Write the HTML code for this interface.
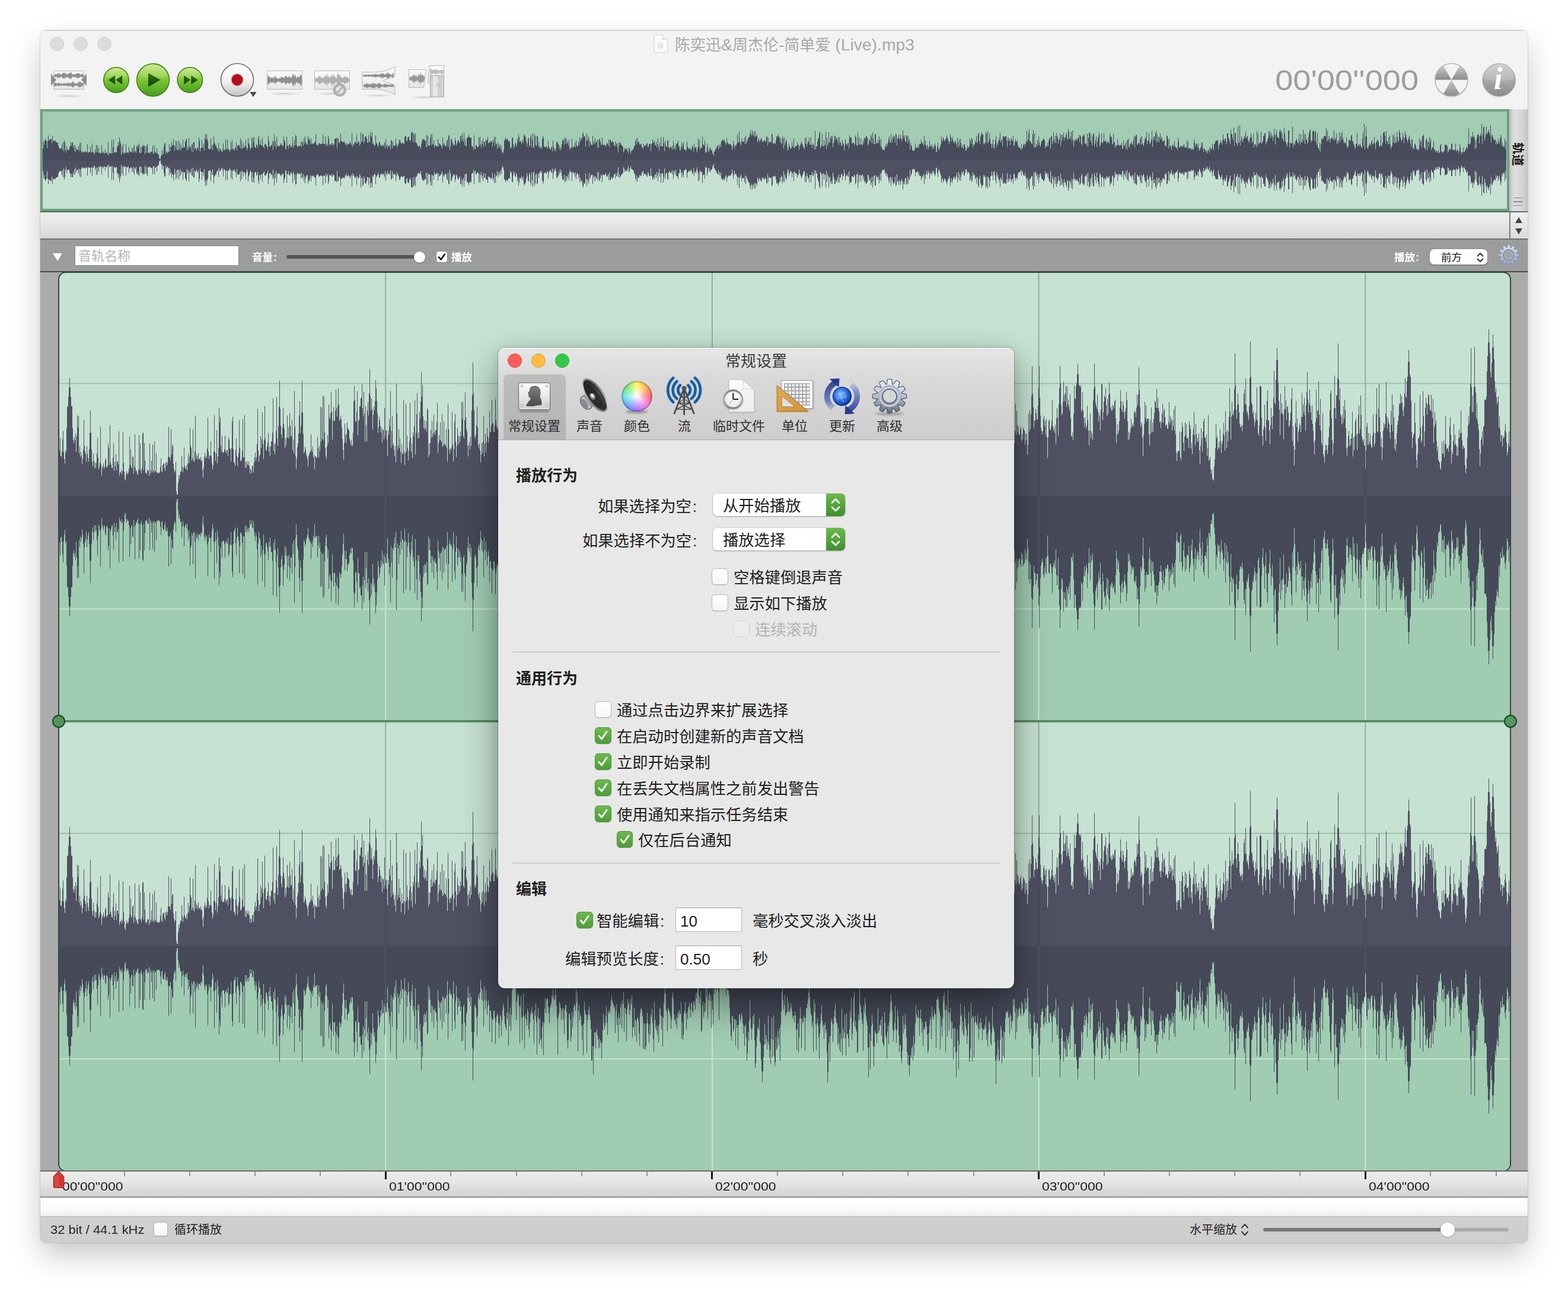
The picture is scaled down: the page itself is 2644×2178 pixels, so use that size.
<!DOCTYPE html>
<html lang="zh"><head><meta charset="utf-8"><title>Audio editor</title>
<style>html,body{margin:0;padding:0}
body{width:2644px;height:2178px;background:#fff;position:relative;overflow:hidden;font-family:"Liberation Sans",sans-serif}
#win{position:absolute;left:68px;top:51px;width:2508px;height:2044px;border-radius:10px;overflow:hidden;background:#f3f3f3;box-shadow:0 0 0 1px rgba(0,0,0,.13),0 22px 50px rgba(0,0,0,.215)}

#in{position:absolute;left:-68px;top:-51px;width:2644px;height:2178px}
#in>*,#din>*{position:absolute}
#in div,#din div{box-sizing:border-box}
.tx{position:absolute;overflow:visible}
.tx text{font-family:"Liberation Sans","Noto Sans CJK SC",sans-serif}
#tb{left:68px;top:51px;width:2508px;height:133px;background:#f3f3f3;border-top:1px solid #cfcfcf}
.tl0{width:24px;height:24px;border-radius:50%;background:#dcdcdc;border:1px solid #d0d0d0}
#time{left:2100px;top:105.5px;width:290px;height:60px;line-height:60px;text-align:right;font-size:48px;color:#9d9d9d;transform:scaleX(1.128);transform-origin:100% 50%;margin-left:1.5px}
#ov{left:68px;top:184px;width:2477px;height:173px;border:4.5px solid #69a085;border-bottom-width:5px;background:#c7e2d3;overflow:hidden}
#ov .a{position:absolute;left:0;top:0;width:100%;height:81.5px;background:#a2ccb3}
#ov svg{position:absolute;left:0;top:0}
#ovline{left:68px;top:356px;width:2508px;height:1.5px;background:#55705f}
#ovside{left:2545px;top:184px;width:31px;height:172px;background:linear-gradient(90deg,#bdbdbd,#dedede 25%,#d6d6d6 70%,#c4c4c4)}
#ovside .grip{position:absolute;left:7px;top:148.5px;width:16px;height:15px;background:linear-gradient(#8a8a8a 0 1.5px,transparent 1.5px 6.5px,#8a8a8a 6.5px 8px,transparent 8px 13px,#8a8a8a 13px 14.5px,transparent 14.5px)}
#strip{left:68px;top:357.5px;width:2477px;height:45px;background:linear-gradient(#ededed,#e9e9e9 35%,#d6d6d6)}
#stripr{left:2545px;top:357.5px;width:31px;height:45px;background:linear-gradient(#efefef,#dcdcdc);border-left:2px solid #7d7d7d}
#stripr .up{position:absolute;left:8px;top:8px;border:6px solid transparent;border-bottom:10px solid #444;border-top:0}
#stripr .dn{position:absolute;left:8px;top:27px;border:6px solid transparent;border-top:10px solid #444;border-bottom:0}
#th{left:68px;top:402px;width:2508px;height:57px;background:#9c9c9c;border-top:2px solid #707070;border-bottom:2px solid #474747}
.tri{width:0;height:0;border:8.5px solid transparent;border-top:13px solid #fff;border-bottom:0}
#tname{left:125.5px;top:413.5px;width:277px;height:34.5px;background:#fff;border:1px solid #8a8a8a}
.sl{height:6px;border-radius:3px}
.kn{border-radius:50%;background:#fff;box-shadow:0 .5px 2px rgba(0,0,0,.45)}
#thcb{left:736px;top:424px;width:18px;height:18px;border-radius:4px;background:#fff;box-shadow:0 0 0 .5px rgba(0,0,0,.3)}
#thcb svg{position:absolute;left:0;top:0}
#thpop{left:2411px;top:420px;width:97px;height:26px;border-radius:7px;background:#fff;box-shadow:0 .5px 1.5px rgba(0,0,0,.4)}
#main{left:68px;top:459px;width:2508px;height:1516px;background:#ababab}
#wf{left:98px;top:458px;width:2450px;height:1517px;border:2px solid #32463b;border-radius:13px;overflow:hidden;background:#c6e2d2}
#wf svg{position:absolute;left:0;top:0}
.hd{width:22px;height:22px;border-radius:50%;background:#57945f;border:2.5px solid #0d4a1c}
#rul{left:68px;top:1973px;width:2508px;height:46px;background:linear-gradient(#ececec,#e6e6e6 40%,#d2d2d2);border-top:2px solid #6b6b6b;border-bottom:2px solid #8e8e8e}
.tk{top:1975px;width:2px;height:8px;background:#9a9a9a}
.tk.M{width:3px;height:12.5px;background:#111}
.rl{top:1987.5px;height:24px;line-height:24px;font-size:20.4px;color:#1c1c1c;white-space:nowrap;transform:scaleX(1.125);transform-origin:0 50%}
#wstrip{left:68px;top:2019px;width:2508px;height:31px;background:linear-gradient(#fff,#fafafa 60%,#f0f0f0)}
#st{left:68px;top:2050px;width:2508px;height:45px;background:#cfcfcf;border-top:1.5px solid #b9b9b9}
.stt{top:2060px;height:26px;line-height:26px;font-size:20.4px;color:#222;white-space:nowrap;transform:scaleX(1.075);transform-origin:0 50%}
.cb{background:linear-gradient(#fff,#f6f6f6);border:1px solid #b4b4b4;box-shadow:0 .5px 1px rgba(0,0,0,.12)}
.cb.on{background:linear-gradient(#6cba4e,#4f9c39);border:1px solid #4a9235}
.cb.dis{background:#ececec;border-color:#d0d0d0;box-shadow:none}
.cb svg{position:absolute;left:-1px;top:-1px}
#dlg{position:absolute;left:840px;top:586px;width:870px;height:1080px;border-radius:10px 10px 11px 11px;overflow:hidden;background:#e8e8e8;box-shadow:0 0 0 1px rgba(0,0,0,.2),0 26px 64px rgba(0,0,0,.40),0 3px 18px rgba(0,0,0,.11)}

#din{position:absolute;left:-840px;top:-586px;width:2644px;height:2178px}
#dtb{left:840px;top:586px;width:870px;height:156px;background:linear-gradient(#e6e6e6,#dadada 30%,#cdcdcd);border-bottom:1.5px solid #a9a9a9;border-top:1px solid #f4f4f4}
.tl{width:24px;height:24px;border-radius:50%;border:1px solid}
#dsel{left:848.5px;top:631px;width:105.5px;height:110px;border-radius:9px 9px 0 0;background:linear-gradient(#bdbdbd,#b4b4b4)}
.pop{width:223px;height:38px;border-radius:7px;background:#fff;box-shadow:0 0 0 .6px rgba(0,0,0,.18),0 1px 2px rgba(0,0,0,.28);overflow:hidden}
.pop .cap{position:absolute;right:0;top:0;width:32px;height:38px;background:linear-gradient(#6cba4d,#3f8f2e)}
.pop svg{position:absolute;left:0;top:0}
.sep{left:864px;width:823px;height:1.5px;background:#cdcdcd}
.inp{width:111.5px;height:41px;background:#fff;border:1px solid #b8b8b8;border-top-color:#a4a4a4;font-size:26px;line-height:44px;padding-left:7px;color:#1d1d1d}
</style></head><body>
<div id="win"><div id="in">
<div id="tb"></div>
<div class="tl0" style="left:84px;top:61.5px"></div>
<div class="tl0" style="left:124px;top:61.5px"></div>
<div class="tl0" style="left:164px;top:61.5px"></div>
<svg class="tx" style="left:1102px;top:58px" width="24" height="31" viewBox="0 0 24 31"><path d="M1 .5h14.5L23.5 8.5V30.5H1z" fill="#fafafa" stroke="#d2d2d2"/><path d="M15.5.5v8h8" fill="#eee" stroke="#d2d2d2"/><circle cx="11.5" cy="19" r="5.2" fill="#dedede"/><path d="M10 21.5v-5l3.6-.8v4.6" fill="none" stroke="#fff" stroke-width="1"/><circle cx="9.2" cy="21.5" r="1" fill="#fff"/><circle cx="12.8" cy="20.5" r="1" fill="#fff"/></svg>
<svg class="tx" role="img" aria-label="陈奕迅&amp;周杰伦-简单爱 (Live).mp3" style="left:1137.8px;top:61.5px" width="406.1" height="32.5" fill="#a9a9a9"><text y="22.88" font-size="26"><tspan x="0">陈奕迅</tspan><tspan x="78" font-size="28.34">&amp;</tspan><tspan x="96.9">周杰伦</tspan><tspan x="174.9" font-size="28.34">-</tspan><tspan x="184.34">简单爱</tspan><tspan x="270.22" font-size="28.34">(Live).mp3</tspan></text></svg>
<svg class="tx" style="left:68px;top:95px" width="2508" height="88" viewBox="68 95 2508 88"><defs>
<linearGradient id="gb" x1="0" y1="0" x2="0" y2="1"><stop offset="0" stop-color="#cbe984"/><stop offset=".45" stop-color="#86c93a"/><stop offset="1" stop-color="#439f1c"/></linearGradient>
<linearGradient id="gt" x1="0" y1="0" x2="0" y2="1"><stop offset="0" stop-color="#2f6c14"/><stop offset="1" stop-color="#0f4a05"/></linearGradient>
<linearGradient id="rec" x1="0" y1="0" x2="0" y2="1"><stop offset="0" stop-color="#fff"/><stop offset=".55" stop-color="#f0f0f0"/><stop offset="1" stop-color="#c4c4c4"/></linearGradient>
<linearGradient id="gry" x1="0" y1="0" x2="0" y2="1"><stop offset="0" stop-color="#c9c9c9"/><stop offset="1" stop-color="#8b8b8b"/></linearGradient>
<linearGradient id="plate" x1="0" y1="0" x2="0" y2="1"><stop offset="0" stop-color="#fbfbfb"/><stop offset="1" stop-color="#e6e6e6"/></linearGradient>
<radialGradient id="shd"><stop offset="0" stop-color="#000" stop-opacity=".16"/><stop offset="1" stop-color="#000" stop-opacity="0"/></radialGradient>
</defs><ellipse cx="116" cy="162" rx="27" ry="3" fill="url(#shd)"/><rect x="90.5" y="119.5" width="51" height="31" fill="url(#plate)" stroke="#b5b5b5"/><g transform="translate(91,120)"><path d="M0 7.5L0.4 6.1L1.2 5.7L2.0 5.6L2.8 4.7L3.6 4.2L4.4 5.6L5.2 5.6L6.0 2.6L6.9 4.6L7.7 4.7L8.5 2.2L9.3 4.3L10.1 3.7L10.9 5.2L11.7 5.5L12.5 6.1L13.3 4.5L14.1 3.1L14.9 3.6L15.7 2.4L16.5 2.3L17.3 4.8L18.1 1.8L19.0 2.8L19.8 4.3L20.6 5.6L21.4 3.5L22.2 5.3L23.0 5.5L23.8 4.3L24.6 3.9L25.4 2.5L26.2 3.9L27.0 2.0L27.8 3.3L28.6 1.2L29.4 1.7L30.2 5.1L31.0 5.2L31.9 5.3L32.7 3.9L33.5 5.7L34.3 5.4L35.1 5.6L35.9 4.7L36.7 4.7L37.5 4.6L38.3 3.8L39.1 3.8L39.9 2.8L40.7 3.8L41.5 3.3L42.3 3.9L43.1 4.1L44.0 5.2L44.8 6.3L45.6 5.0L46.4 4.5L47.2 4.4L48.0 5.0L48.8 4.6L49.6 5.7L50.0 7.5L49.6 9.3L48.8 10.4L48.0 10.0L47.2 10.6L46.4 10.5L45.6 10.0L44.8 8.7L44.0 9.8L43.1 10.9L42.3 11.1L41.5 11.7L40.7 11.2L39.9 12.2L39.1 11.2L38.3 11.2L37.5 10.4L36.7 10.3L35.9 10.3L35.1 9.4L34.3 9.6L33.5 9.3L32.7 11.1L31.9 9.7L31.0 9.8L30.2 9.9L29.4 13.3L28.6 13.8L27.8 11.7L27.0 13.0L26.2 11.1L25.4 12.5L24.6 11.1L23.8 10.7L23.0 9.5L22.2 9.7L21.4 11.5L20.6 9.4L19.8 10.7L19.0 12.2L18.1 13.2L17.3 10.2L16.5 12.7L15.7 12.6L14.9 11.4L14.1 11.9L13.3 10.5L12.5 8.9L11.7 9.5L10.9 9.8L10.1 11.3L9.3 10.7L8.5 12.8L7.7 10.3L6.9 10.4L6.0 12.4L5.2 9.4L4.4 9.4L3.6 10.8L2.8 10.3L2.0 9.4L1.2 9.3L0.4 8.9z" fill="#8f8f8f"/></g><g transform="translate(91,135)"><path d="M0 7.5L0.4 4.4L1.2 4.3L2.0 4.4L2.8 4.4L3.6 5.1L4.4 5.0L5.2 6.6L6.0 5.7L6.9 4.6L7.7 5.1L8.5 4.5L9.3 6.1L10.1 5.3L10.9 5.8L11.7 5.2L12.5 5.2L13.3 6.4L14.1 6.1L14.9 6.1L15.7 5.2L16.5 5.3L17.3 6.2L18.1 4.8L19.0 6.0L19.8 4.8L20.6 5.9L21.4 6.1L22.2 3.8L23.0 5.6L23.8 5.6L24.6 3.9L25.4 4.5L26.2 6.0L27.0 5.1L27.8 5.4L28.6 4.7L29.4 5.5L30.2 3.0L31.0 3.4L31.9 2.2L32.7 2.3L33.5 4.5L34.3 4.4L35.1 5.2L35.9 5.5L36.7 6.0L37.5 5.9L38.3 5.4L39.1 6.2L39.9 3.9L40.7 4.4L41.5 4.2L42.3 1.8L43.1 3.0L44.0 3.7L44.8 3.2L45.6 2.6L46.4 5.4L47.2 3.0L48.0 6.2L48.8 5.3L49.6 4.6L50.0 7.5L49.6 10.4L48.8 9.7L48.0 8.8L47.2 12.0L46.4 9.6L45.6 12.4L44.8 11.8L44.0 11.3L43.1 12.0L42.3 13.2L41.5 10.8L40.7 10.6L39.9 11.1L39.1 8.8L38.3 9.6L37.5 9.1L36.7 9.0L35.9 9.5L35.1 9.8L34.3 10.6L33.5 10.5L32.7 12.7L31.9 12.8L31.0 11.6L30.2 12.0L29.4 9.5L28.6 10.3L27.8 9.6L27.0 9.9L26.2 9.0L25.4 10.5L24.6 11.1L23.8 9.4L23.0 9.4L22.2 11.2L21.4 8.9L20.6 9.1L19.8 10.2L19.0 9.0L18.1 10.2L17.3 8.8L16.5 9.7L15.7 9.8L14.9 8.9L14.1 8.9L13.3 8.6L12.5 9.8L11.7 9.8L10.9 9.2L10.1 9.7L9.3 8.9L8.5 10.5L7.7 9.9L6.9 10.4L6.0 9.3L5.2 8.4L4.4 10.0L3.6 9.9L2.8 10.6L2.0 10.6L1.2 10.7L0.4 10.6z" fill="#8f8f8f"/></g><path d="M86 124v21l9-10.5zM146 124v21l-9-10.5z" fill="#8e8e8e"/><g transform="translate(196,134.8)"><circle r="22.900000000000002" fill="#fff" opacity=".75"/><circle r="21.3" fill="url(#gb)" stroke="#3f7d18" stroke-width="1.6"/><path d="M-18.3 -6.0A19.2 19.2 0 0 1 18.3 -6.0Q0 2.6 -18.3 -6.0" fill="#fff" opacity=".13"/><path d="M-13.2 0L-2 -7.7V7.7zM-.6 0L10.2 -7.7V7.7z" fill="url(#gt)"/></g><g transform="translate(258,134.8)"><circle r="29.0" fill="#fff" opacity=".75"/><circle r="27.4" fill="url(#gb)" stroke="#3f7d18" stroke-width="1.6"/><path d="M-23.6 -7.7A24.7 24.7 0 0 1 23.6 -7.7Q0 3.3 -23.6 -7.7" fill="#fff" opacity=".13"/><path d="M-8 -11.6L12.6 0L-8 11.6z" fill="url(#gt)"/></g><g transform="translate(320.3,134.8)"><circle r="22.900000000000002" fill="#fff" opacity=".75"/><circle r="21.3" fill="url(#gb)" stroke="#3f7d18" stroke-width="1.6"/><path d="M-18.3 -6.0A19.2 19.2 0 0 1 18.3 -6.0Q0 2.6 -18.3 -6.0" fill="#fff" opacity=".13"/><path d="M13.2 0L2 -7.7V7.7zM.9 0L-10.2 -7.7V7.7z" fill="url(#gt)"/></g><circle cx="400" cy="136" r="28.5" fill="#000" opacity=".06"/><circle cx="400" cy="134.6" r="27.5" fill="url(#rec)" stroke="#5a5a5a" stroke-width="1.4"/><circle cx="400" cy="134.6" r="11" fill="#f6c9cb"/><circle cx="400" cy="134.6" r="9.6" fill="#b3101c"/><path d="M421.5 155h11l-5.5 8.5z" fill="#444"/><ellipse cx="480" cy="158" rx="30" ry="2.6" fill="url(#shd)"/><rect x="450.5" y="119.5" width="59" height="31" fill="url(#plate)" stroke="#bcbcbc"/><g transform="translate(451,120)"><path d="M0 15.0L0.4 8.4L1.2 8.0L2.0 6.3L2.8 9.5L3.6 9.9L4.4 10.3L5.2 12.4L6.0 11.6L6.8 10.6L7.7 9.5L8.5 12.2L9.3 11.1L10.1 12.0L10.9 8.6L11.7 9.3L12.5 12.4L13.3 8.4L14.1 8.9L14.9 10.4L15.7 10.9L16.5 12.7L17.3 13.2L18.1 11.2L18.9 12.7L19.7 12.1L20.5 11.7L21.3 12.5L22.2 10.5L23.0 10.6L23.8 8.8L24.6 10.4L25.4 10.0L26.2 10.9L27.0 10.7L27.8 11.8L28.6 12.1L29.4 8.8L30.2 8.0L31.0 8.0L31.8 8.1L32.6 10.0L33.4 10.3L34.2 9.9L35.0 11.3L35.8 7.4L36.7 10.0L37.5 8.5L38.3 11.4L39.1 10.0L39.9 9.0L40.7 12.1L41.5 10.3L42.3 4.8L43.1 7.3L43.9 2.7L44.7 7.3L45.5 10.0L46.3 6.0L47.1 5.8L47.9 10.1L48.7 11.9L49.5 11.8L50.3 9.2L51.2 8.3L52.0 10.8L52.8 9.2L53.6 9.8L54.4 9.8L55.2 3.1L56.0 8.7L56.8 5.7L57.6 7.4L58.0 15.0L57.6 22.6L56.8 24.3L56.0 21.3L55.2 26.9L54.4 20.2L53.6 20.2L52.8 20.8L52.0 19.2L51.2 21.7L50.3 20.8L49.5 18.2L48.7 18.1L47.9 19.9L47.1 24.2L46.3 24.0L45.5 20.0L44.7 22.7L43.9 27.3L43.1 22.7L42.3 25.2L41.5 19.7L40.7 17.9L39.9 21.0L39.1 20.0L38.3 18.6L37.5 21.5L36.7 20.0L35.8 22.6L35.0 18.7L34.2 20.1L33.4 19.7L32.6 20.0L31.8 21.9L31.0 22.0L30.2 22.0L29.4 21.2L28.6 17.9L27.8 18.2L27.0 19.3L26.2 19.1L25.4 20.0L24.6 19.6L23.8 21.2L23.0 19.4L22.2 19.5L21.3 17.5L20.5 18.3L19.7 17.9L18.9 17.3L18.1 18.8L17.3 16.8L16.5 17.3L15.7 19.1L14.9 19.6L14.1 21.1L13.3 21.6L12.5 17.6L11.7 20.7L10.9 21.4L10.1 18.0L9.3 18.9L8.5 17.8L7.7 20.5L6.8 19.4L6.0 18.4L5.2 17.6L4.4 19.7L3.6 20.1L2.8 20.5L2.0 23.7L1.2 22.0L0.4 21.6z" fill="#8f8f8f"/></g><ellipse cx="560" cy="158" rx="30" ry="2.6" fill="url(#shd)"/><rect x="530.5" y="119.5" width="59" height="31" fill="url(#plate)" stroke="#bcbcbc"/><g transform="translate(531,120)"><path d="M0 15.0L0.4 11.1L1.2 10.7L2.0 11.0L2.8 12.7L3.6 12.9L4.4 11.2L5.2 11.3L6.0 8.3L6.8 8.5L7.7 8.7L8.5 8.8L9.3 8.2L10.1 11.3L10.9 10.0L11.7 11.8L12.5 9.2L13.3 13.1L14.1 9.7L14.9 12.1L15.7 8.1L16.5 9.4L17.3 8.4L18.1 4.6L18.9 10.7L19.7 10.3L20.5 4.1L21.3 7.7L22.2 11.1L23.0 7.0L23.8 8.9L24.6 12.8L25.4 10.5L26.2 11.0L27.0 9.1L27.8 5.9L28.6 9.0L29.4 4.0L30.2 9.7L31.0 8.8L31.8 4.0L32.6 8.2L33.4 9.0L34.2 9.3L35.0 11.2L35.8 11.4L36.7 12.1L37.5 7.2L38.3 4.4L39.1 3.3L39.9 5.3L40.7 7.7L41.5 7.8L42.3 5.7L43.1 6.6L43.9 11.0L44.7 11.0L45.5 11.2L46.3 11.6L47.1 9.7L47.9 10.1L48.7 12.0L49.5 7.1L50.3 9.2L51.2 8.5L52.0 10.4L52.8 9.4L53.6 10.0L54.4 8.5L55.2 12.1L56.0 10.7L56.8 12.5L57.6 11.0L58.0 15.0L57.6 19.0L56.8 17.5L56.0 19.3L55.2 17.9L54.4 21.5L53.6 20.0L52.8 20.6L52.0 19.6L51.2 21.5L50.3 20.8L49.5 22.9L48.7 18.0L47.9 19.9L47.1 20.3L46.3 18.4L45.5 18.8L44.7 19.0L43.9 19.0L43.1 23.4L42.3 24.3L41.5 22.2L40.7 22.3L39.9 24.7L39.1 26.7L38.3 25.6L37.5 22.8L36.7 17.9L35.8 18.6L35.0 18.8L34.2 20.7L33.4 21.0L32.6 21.8L31.8 26.0L31.0 21.2L30.2 20.3L29.4 26.0L28.6 21.0L27.8 24.1L27.0 20.9L26.2 19.0L25.4 19.5L24.6 17.2L23.8 21.1L23.0 23.0L22.2 18.9L21.3 22.3L20.5 25.9L19.7 19.7L18.9 19.3L18.1 25.4L17.3 21.6L16.5 20.6L15.7 21.9L14.9 17.9L14.1 20.3L13.3 16.9L12.5 20.8L11.7 18.2L10.9 20.0L10.1 18.7L9.3 21.8L8.5 21.2L7.7 21.3L6.8 21.5L6.0 21.7L5.2 18.7L4.4 18.8L3.6 17.1L2.8 17.3L2.0 19.0L1.2 19.3L0.4 18.9z" fill="#b0b0b0"/></g><circle cx="572.8" cy="151.7" r="10.6" fill="#b4b4b4" stroke="#a2a2a2"/><circle cx="572.8" cy="151.7" r="6.4" fill="#e8e8e8"/><path d="M568.3 156.3l9-9.2" stroke="#b4b4b4" stroke-width="3.2"/><ellipse cx="638" cy="161" rx="28" ry="2.4" fill="url(#shd)"/><path d="M610.5 121.5h22c14 0 24-4 33.5-9v16c-9 3-17 6-21 7.500c4 1.500 12 4.500 21 7.500v16c-9.500-5-19.500-9-33.500-9h-22z" fill="url(#plate)" stroke="#b8b8b8"/><g transform="translate(612,121)"><path d="M0 6.5L0.4 5.2L1.2 4.4L2.0 4.6L2.8 5.0L3.6 5.4L4.4 4.6L5.2 4.4L6.0 4.8L6.8 4.7L7.6 5.1L8.4 5.5L9.2 4.7L10.0 4.3L10.8 5.3L11.6 4.0L12.4 5.1L13.2 5.2L14.0 5.6L14.8 4.4L15.6 4.5L16.4 4.0L17.2 4.2L18.0 5.2L18.8 4.4L19.6 3.8L20.4 4.8L21.2 2.5L22.0 4.1L22.8 4.8L23.6 3.4L24.4 5.2L25.2 4.1L26.0 5.0L26.8 4.4L27.6 4.4L28.4 3.7L29.2 4.2L30.0 4.6L30.8 1.5L31.6 3.7L32.4 1.9L33.2 4.0L34.0 2.0L34.8 2.8L35.6 3.8L36.4 4.5L37.2 4.5L38.0 3.6L38.8 4.6L39.6 3.2L40.4 1.6L41.2 3.7L42.0 0.8L42.8 1.1L43.6 3.1L44.4 3.5L45.2 3.6L46.0 4.3L46.8 3.6L47.6 5.2L48.4 5.4L49.2 5.0L50.0 3.0L50.8 1.8L51.6 3.1L52.0 6.5L51.6 9.9L50.8 11.2L50.0 10.0L49.2 8.0L48.4 7.6L47.6 7.8L46.8 9.4L46.0 8.7L45.2 9.4L44.4 9.5L43.6 9.9L42.8 11.9L42.0 12.2L41.2 9.3L40.4 11.4L39.6 9.8L38.8 8.4L38.0 9.4L37.2 8.5L36.4 8.5L35.6 9.2L34.8 10.2L34.0 11.0L33.2 9.0L32.4 11.1L31.6 9.3L30.8 11.5L30.0 8.4L29.2 8.8L28.4 9.3L27.6 8.6L26.8 8.6L26.0 8.0L25.2 8.9L24.4 7.8L23.6 9.6L22.8 8.2L22.0 8.9L21.2 10.5L20.4 8.2L19.6 9.2L18.8 8.6L18.0 7.8L17.2 8.8L16.4 9.0L15.6 8.5L14.8 8.6L14.0 7.4L13.2 7.8L12.4 7.9L11.6 9.0L10.8 7.7L10.0 8.7L9.2 8.3L8.4 7.5L7.6 7.9L6.8 8.3L6.0 8.2L5.2 8.6L4.4 8.4L3.6 7.6L2.8 8.0L2.0 8.4L1.2 8.6L0.4 7.8z" fill="#909090"/></g><g transform="translate(612,138)"><path d="M0 6.5L0.4 4.4L1.2 5.3L2.0 5.3L2.8 2.7L3.6 4.5L4.4 4.5L5.2 2.6L6.0 3.5L6.8 1.7L7.6 4.0L8.4 2.0L9.2 4.2L10.0 4.0L10.8 4.0L11.6 4.6L12.4 3.4L13.2 3.2L14.0 4.7L14.8 1.6L15.6 2.3L16.4 3.2L17.2 3.7L18.0 1.3L18.8 2.6L19.6 1.9L20.4 3.1L21.2 3.4L22.0 4.8L22.8 4.3L23.6 3.9L24.4 4.3L25.2 1.8L26.0 3.6L26.8 1.9L27.6 1.2L28.4 2.4L29.2 4.3L30.0 2.5L30.8 3.4L31.6 4.9L32.4 5.5L33.2 5.0L34.0 5.5L34.8 3.4L35.6 4.1L36.4 3.8L37.2 4.0L38.0 3.3L38.8 2.7L39.6 4.4L40.4 4.4L41.2 4.1L42.0 4.9L42.8 4.6L43.6 4.9L44.4 5.1L45.2 4.6L46.0 4.7L46.8 5.4L47.6 3.6L48.4 4.8L49.2 4.6L50.0 4.7L50.8 3.8L51.6 3.8L52.0 6.5L51.6 9.2L50.8 9.2L50.0 8.3L49.2 8.4L48.4 8.2L47.6 9.4L46.8 7.6L46.0 8.3L45.2 8.4L44.4 7.9L43.6 8.1L42.8 8.4L42.0 8.1L41.2 8.9L40.4 8.6L39.6 8.6L38.8 10.3L38.0 9.7L37.2 9.0L36.4 9.2L35.6 8.9L34.8 9.6L34.0 7.5L33.2 8.0L32.4 7.5L31.6 8.1L30.8 9.6L30.0 10.5L29.2 8.7L28.4 10.6L27.6 11.8L26.8 11.1L26.0 9.4L25.2 11.2L24.4 8.7L23.6 9.1L22.8 8.7L22.0 8.2L21.2 9.6L20.4 9.9L19.6 11.1L18.8 10.4L18.0 11.7L17.2 9.3L16.4 9.8L15.6 10.7L14.8 11.4L14.0 8.3L13.2 9.8L12.4 9.6L11.6 8.4L10.8 9.0L10.0 9.0L9.2 8.8L8.4 11.0L7.6 9.0L6.8 11.3L6.0 9.5L5.2 10.4L4.4 8.5L3.6 8.5L2.8 10.3L2.0 7.7L1.2 7.7L0.4 8.6z" fill="#909090"/></g><ellipse cx="715" cy="164" rx="26" ry="2.4" fill="url(#shd)"/><path d="M689.500 117.500h29l-4 30h-25z" fill="url(#plate)" stroke="#b8b8b8"/><g transform="translate(690,118)"><path d="M0 14.5L0.4 12.4L1.2 12.3L2.0 11.6L2.8 10.1L3.7 11.7L4.5 11.5L5.3 10.6L6.1 7.4L6.9 10.5L7.7 6.9L8.5 7.3L9.3 10.6L10.2 8.6L11.0 9.6L11.8 10.4L12.6 9.2L13.4 12.3L14.2 12.0L15.0 6.5L15.8 8.6L16.7 9.3L17.5 7.9L18.3 7.4L19.1 2.6L19.9 8.7L20.7 9.0L21.5 7.2L22.3 8.5L23.2 7.9L24.0 10.1L24.8 10.8L25.6 10.5L26.0 14.5L25.6 18.5L24.8 18.2L24.0 18.9L23.2 21.1L22.3 20.5L21.5 21.8L20.7 20.0L19.9 20.3L19.1 26.4L18.3 21.6L17.5 21.1L16.7 19.7L15.8 20.4L15.0 22.5L14.2 17.0L13.4 16.7L12.6 19.8L11.8 18.6L11.0 19.4L10.2 20.4L9.3 18.4L8.5 21.7L7.7 22.1L6.9 18.5L6.1 21.6L5.3 18.4L4.5 17.5L3.7 17.3L2.8 18.9L2.0 17.4L1.2 16.7L0.4 16.6z" fill="#9a9a9a"/></g><path d="M724.500 110.500h24v29h-27z" fill="url(#plate)" stroke="#b8b8b8"/><g transform="translate(725,111)"><path d="M0 10.0L0.4 5.1L1.2 5.1L2.1 4.7L2.9 7.1L3.7 6.2L4.5 6.0L5.3 6.5L6.2 8.4L7.0 7.0L7.8 6.8L8.6 6.9L9.4 5.3L10.3 6.6L11.1 6.9L11.9 5.4L12.7 6.5L13.6 7.6L14.4 7.7L15.2 7.4L16.0 8.6L16.8 7.5L17.7 7.2L18.5 7.7L19.3 6.5L20.1 6.1L20.9 6.9L21.8 6.5L22.6 8.0L23.0 10.0L22.6 12.0L21.8 13.5L20.9 13.1L20.1 13.9L19.3 13.5L18.5 12.3L17.7 12.8L16.8 12.5L16.0 11.4L15.2 12.6L14.4 12.3L13.6 12.4L12.7 13.5L11.9 14.6L11.1 13.1L10.3 13.4L9.4 14.7L8.6 13.1L7.8 13.2L7.0 13.0L6.2 11.6L5.3 13.5L4.5 14.0L3.7 13.8L2.9 12.9L2.1 15.3L1.2 14.9L0.4 14.9z" fill="#bbb"/></g><rect x="725.500" y="127.500" width="23" height="36" fill="#d0d0d0" stroke="#a9a9a9"/><rect x="730" y="128" width="8" height="35" fill="#e6e6e6"/><rect x="736.500" y="141.500" width="5" height="3" fill="#f4f4f4" stroke="#999" stroke-width=".8"/><circle cx="2447.5" cy="136.1" r="28.5" fill="#000" opacity=".08"/><circle cx="2447.5" cy="134.6" r="27.5" fill="#f3f3f3" stroke="#a8a8a8" stroke-width="1.2"/><path d="M2447.5 134.6L2420.5 134.6A27 27 0 0 1 2434.0 111.2z" fill="url(#gry)"/><path d="M2447.5 134.6L2461.0 111.2A27 27 0 0 1 2474.5 134.6z" fill="url(#gry)"/><path d="M2447.5 134.6L2461.0 158.0A27 27 0 0 1 2434.0 158.0z" fill="url(#gry)"/><circle cx="2527.7" cy="136.1" r="28.5" fill="#000" opacity=".08"/><circle cx="2527.7" cy="134.6" r="27.5" fill="url(#gry)" stroke="#8c8c8c" stroke-width="1"/><path d="M2500.7 131.6A27 27 0 0 1 2554.7 131.6Q2527.7 142.6 2500.7 131.6" fill="#fff" opacity=".16"/><text x="2526.2" y="150.1" style="font-family:Liberation Serif,serif;font-style:italic;font-weight:bold;font-size:52px" fill="#fff" text-anchor="middle">i</text></svg>
<div id="time">00'00''000</div>
<div id="ov"><div class="a"></div><div class="b"></div><svg width="2468" height="164" viewBox="0 0 2468 164"><defs><filter id="wb2" x="-1%" y="-1%" width="102%" height="102%"><feGaussianBlur stdDeviation="0.45 0.2"/></filter><path id="ovw" d="M0 1V-19h1V-31.6h1V-25.4h1V-32.6h1V-35.5h1V-32.9h1V-31.8h1V-19.6h1V-31.8h1V-41.3h1V-32.9h1V-33.6h1V-34.9h1V-34.8h1V-35.9h1V-28.2h1V-40.3h1V-31.5h1V-33.1h1V-31.6h1V-32.6h1V-32h1V-29.2h1V-29.8h1V-29.7h1V-28.5h1V-23.4h1V-20.6h1V-18.3h1V-19.4h1V-19h1V-19.4h1V-26h1V-17.3h1V-29.6h1V-14.6h1V-33.2h1V-28.9h1V-16.4h1V-12h1V-22.5h1V-17.8h1V-16.4h1V-16.9h1V-16.5h1V-21.9h1V-23h1V-29.4h1V-23.8h1V-29.2h1V-29.5h1V-21.1h1V-24.9h1V-15.6h1V-24.8h1V-12.9h1V-20.7h1V-16.7h1V-17.8h1V-16.9h1V-23.3h1V-14.7h1V-28.3h1V-16h1V-29.3h1V-13.6h1V-11.7h1V-14.3h1V-14.5h1V-12.4h1V-12.9h1V-14.3h1V-14.5h1V-11.9h1V-13.5h1V-26.5h1V-12.1h1V-12.7h1V-13.2h1V-14h1V-22.5h1V-13h1V-12.1h1V-27.7h1V-13.2h1V-13.5h1V-10.1h1V-10.2h1V-17.1h1V-12.7h1V-25.6h1V-13.2h1V-24h1V-11.8h1V-19.8h1V-12.1h1V-11.9h1V-10.3h1V-11.8h1V-24.5h1V-11.7h1V-12.2h1V-14.5h1V-10.7h1V-11.5h1V-17.5h1V-11.2h1V-12.2h1V-12h1V-8.5h1V-29.8h1V-8.3h1V-12.3h1V-11.6h1V-10.9h1V-10.4h1V-34.1h1V-10.6h1V-21.5h1V-34.2h1V-12.2h1V-12.2h1V-12.7h1V-13.3h1V-12h1V-21.8h1V-23.3h1V-29.8h1V-23.9h1V-38h1V-31.7h1V-27.3h1V-8.4h1V-22.9h1V-11.9h1V-26.9h1V-10.1h1V-12.1h1V-11.7h1V-11.3h1V-26.3h1V-11.6h1V-13.2h1V-12.2h1V-11.2h1V-21.8h1V-13.9h1V-14.4h1V-13.1h1V-12.4h1V-19.5h1V-14h1V-20.9h1V-11.9h1V-25.3h1V-13.9h1V-15.2h1V-11.7h1V-22.6h1V-24.8h1V-19.9h1V-24.8h1V-27.9h1V-11.8h1V-11.2h1V-22.3h1V-12.2h1V-22.2h1V-25.1h1V-21.9h1V-25.1h1V-23.5h1V-10.1h1V-22.8h1V-12.3h1V-24.1h1V-27.6h1V-11.4h1V-13h1V-12.2h1V-11.3h1V-12.5h1V-13.2h1V-14h1V-13.9h1V-23.9h1V-10.4h1V-10.8h1V-24.5h1V-13.6h1V-12.7h1V-11.8h1V-19.5h1V-10.5h1V-10h1V-8.5h1V-3.1h1V-1.1h1V-1.1h1V-6.2h1V-7.9h1V-16.3h1V-9.1h1V-10.7h1V-22.2h1V-28.5h1V-27.6h1V-9.6h1V-14.6h1V-12.6h1V-11.1h1V-14.5h1V-12.8h1V-26.3h1V-14.6h1V-22.7h1V-20.9h1V-30.3h1V-24.6h1V-24.3h1V-34.8h1V-25.1h1V-15.2h1V-23h1V-32.6h1V-17.7h1V-30.7h1V-15.9h1V-17h1V-32.7h1V-17.4h1V-27.8h1V-15.8h1V-25.1h1V-19.5h1V-19.7h1V-33.5h1V-20.6h1V-22.3h1V-20.5h1V-31.3h1V-33h1V-35.4h1V-15.5h1V-22.5h1V-17.4h1V-36.6h1V-20.1h1V-23.2h1V-20.9h1V-15h1V-25.9h1V-27.4h1V-13.3h1V-29.4h1V-29.7h1V-18h1V-19.5h1V-19.6h1V-15.2h1V-20.1h1V-21.2h1V-17.5h1V-37.4h1V-32h1V-14h1V-19.6h1V-19.9h1V-34.1h1V-21h1V-20.2h1V-27.6h1V-15.5h1V-35.8h1V-43.9h1V-33.6h1V-42.5h1V-34.7h1V-31.2h1V-18.4h1V-19.2h1V-17.4h1V-17h1V-36.1h1V-19.9h1V-25.4h1V-16.4h1V-25.7h1V-39.5h1V-29.1h1V-26.7h1V-23.9h1V-24.8h1V-20.6h1V-18.7h1V-16.3h1V-29h1V-13.7h1V-19.4h1V-18.5h1V-16.4h1V-14.6h1V-12.9h1V-17.9h1V-28.3h1V-14.8h1V-17.5h1V-16.8h1V-34.7h1V-19.1h1V-17.7h1V-33.9h1V-17.9h1V-18.7h1V-16.8h1V-13.8h1V-16.4h1V-30.3h1V-18.3h1V-33.2h1V-18.8h1V-16.5h1V-19.4h1V-15.8h1V-19h1V-21.6h1V-29.3h1V-15.7h1V-24.1h1V-25.3h1V-24.9h1V-24.2h1V-20.7h1V-35.9h1V-18.7h1V-32.5h1V-18.5h1V-20.8h1V-27.9h1V-20.6h1V-20.8h1V-24.2h1V-33h1V-21.5h1V-16.3h1V-19.5h1V-36.4h1V-27.9h1V-25.6h1V-20.1h1V-17.5h1V-21.6h1V-36.8h1V-20.7h1V-37.4h1V-29.9h1V-38.6h1V-21.7h1V-20.2h1V-20.7h1V-26.2h1V-25.1h1V-19.9h1V-35.1h1V-40.2h1V-25.8h1V-25.8h1V-32.9h1V-24h1V-24.5h1V-37.3h1V-22.8h1V-21.4h1V-19.6h1V-26.3h1V-26.9h1V-25.5h1V-23.6h1V-21.9h1V-17.9h1V-41.1h1V-32.2h1V-22.8h1V-22.1h1V-23.1h1V-24.4h1V-25.7h1V-31.9h1V-16.6h1V-30.6h1V-43.1h1V-23.4h1V-31.9h1V-19h1V-38.7h1V-23.5h1V-24.4h1V-22.5h1V-22.2h1V-23.7h1V-25h1V-28h1V-25.6h1V-25.2h1V-23h1V-23.6h1V-39.5h1V-33h1V-30h1V-18.8h1V-17.5h1V-39h1V-24.2h1V-23.5h1V-19.1h1V-25.5h1V-26.9h1V-24h1V-20.9h1V-22.1h1V-24.9h1V-39h1V-20h1V-23.6h1V-33.6h1V-24.2h1V-41.7h1V-40.8h1V-24.4h1V-22h1V-21.9h1V-24.6h1V-23.7h1V-22.8h1V-23.3h1V-30.9h1V-22h1V-31h1V-29.2h1V-23.9h1V-35.7h1V-27.6h1V-39.4h1V-30.5h1V-27.6h1V-25.7h1V-25.8h1V-40.3h1V-34.3h1V-36.2h1V-32.1h1V-26.1h1V-36.2h1V-26.9h1V-28.3h1V-26.4h1V-26.5h1V-28.5h1V-29.1h1V-30.5h1V-43.2h1V-26.8h1V-24.5h1V-24.1h1V-25.3h1V-27.7h1V-28.6h1V-27.1h1V-26.6h1V-26h1V-27.7h1V-26.9h1V-42.4h1V-27.1h1V-26.5h1V-26.6h1V-39.5h1V-23h1V-28.4h1V-26.3h1V-23.7h1V-40.6h1V-36h1V-24.9h1V-26.6h1V-26.2h1V-24h1V-27.9h1V-28.7h1V-23.8h1V-26h1V-26h1V-36h1V-35.1h1V-36.2h1V-36.9h1V-18.9h1V-37h1V-35.2h1V-28.1h1V-29h1V-31.1h1V-44.1h1V-32h1V-31.3h1V-30.5h1V-29.3h1V-30.8h1V-31.5h1V-28.2h1V-25.6h1V-27.9h1V-23h1V-27.2h1V-27.2h1V-25.6h1V-26.7h1V-28.4h1V-31.5h1V-27.6h1V-25h1V-45h1V-22.5h1V-27.3h1V-24.3h1V-27.7h1V-30.4h1V-30h1V-27.6h1V-42h1V-27.2h1V-29.4h1V-31.7h1V-29.9h1V-24.1h1V-26.2h1V-46.5h1V-30.2h1V-31h1V-44.3h1V-42.2h1V-27.9h1V-31.6h1V-39h1V-39.8h1V-39.3h1V-35.7h1V-29h1V-29.4h1V-42.1h1V-30.3h1V-29.7h1V-47h1V-39.3h1V-38.9h1V-46.6h1V-26.4h1V-28.8h1V-26h1V-23.9h1V-24.1h1V-41.1h1V-27.2h1V-29.3h1V-25.2h1V-21.6h1V-25.3h1V-30h1V-30h1V-25.8h1V-23.1h1V-23.7h1V-25.1h1V-24.1h1V-23h1V-26h1V-29.6h1V-19.2h1V-34.9h1V-23.2h1V-25.7h1V-19.1h1V-23.8h1V-23h1V-23.3h1V-25.5h1V-17.9h1V-32.7h1V-32.8h1V-19.3h1V-30.8h1V-24.1h1V-23.8h1V-23.9h1V-24.4h1V-35.7h1V-27.3h1V-21h1V-23.7h1V-26.1h1V-28.2h1V-33.8h1V-33.3h1V-29.7h1V-27.5h1V-28h1V-28.2h1V-29.3h1V-27.5h1V-26.4h1V-38.2h1V-40.9h1V-39.7h1V-32.5h1V-31.1h1V-37.6h1V-38.5h1V-39.3h1V-33.7h1V-30.4h1V-33.2h1V-45.3h1V-46.6h1V-46.9h1V-29.3h1V-45.4h1V-42.3h1V-30h1V-44.3h1V-28.2h1V-28.6h1V-25.7h1V-23.3h1V-22.1h1V-23.1h1V-23.6h1V-21.9h1V-18.6h1V-26.3h1V-31.6h1V-34.5h1V-33.9h1V-36.1h1V-32.9h1V-33.3h1V-32.5h1V-21.8h1V-42.1h1V-22.2h1V-40.7h1V-23.8h1V-24.6h1V-24.5h1V-37.2h1V-43.4h1V-25h1V-43.1h1V-25.6h1V-26.9h1V-33.6h1V-21h1V-24.1h1V-25.1h1V-23.6h1V-22.1h1V-22.4h1V-34.9h1V-23h1V-28.2h1V-27.1h1V-26.1h1V-25.1h1V-22.4h1V-19.6h1V-37.9h1V-24.9h1V-28.5h1V-26h1V-23.5h1V-23.1h1V-24.8h1V-32.5h1V-34.1h1V-21.4h1V-41.5h1V-40.6h1V-16.9h1V-22.8h1V-35.2h1V-35.1h1V-31h1V-27.5h1V-23.9h1V-26h1V-24.8h1V-36.8h1V-32.5h1V-24.5h1V-27h1V-30.1h1V-33.6h1V-32.6h1V-29.6h1V-27.7h1V-40.3h1V-41h1V-31.9h1V-44.5h1V-35.1h1V-30.5h1V-45.4h1V-25h1V-35h1V-23.4h1V-23.3h1V-36.9h1V-38.3h1V-37.9h1V-42.4h1V-38.3h1V-38.2h1V-36.5h1V-37.5h1V-23.2h1V-23h1V-22.1h1V-16.6h1V-41.6h1V-20.1h1V-17.5h1V-25h1V-23.7h1V-21.9h1V-20.9h1V-21.5h1V-38h1V-24h1V-39h1V-25.7h1V-20.4h1V-31.1h1V-26.4h1V-35.6h1V-22.3h1V-31h1V-30h1V-23.5h1V-33h1V-32.8h1V-34h1V-38.8h1V-27.5h1V-29.4h1V-28.6h1V-31.4h1V-29.7h1V-32.1h1V-31.6h1V-22.2h1V-34.1h1V-29.7h1V-39h1V-23.9h1V-38.7h1V-27.6h1V-26.3h1V-18.4h1V-29.4h1V-21.1h1V-26h1V-20.2h1V-26h1V-17.4h1V-23.8h1V-13.9h1V-10.5h1V-12.6h1V-16.9h1V-33.2h1V-33.3h1V-37.4h1V-34.4h1V-33.9h1V-36.3h1V-33.6h1V-31.6h1V-30.3h1V-31.9h1V-19h1V-22.6h1V-20h1V-37.1h1V-37.7h1V-26.1h1V-19.3h1V-23h1V-28h1V-28.3h1V-22h1V-25.1h1V-35.9h1V-30.6h1V-43.3h1V-37.9h1V-30h1V-32.1h1V-30.9h1V-26.7h1V-30.6h1V-34.6h1V-28.4h1V-41.2h1V-42.7h1V-40.1h1V-37.5h1V-31.1h1V-22.1h1V-27.8h1V-35.3h1V-36.9h1V-22h1V-24.8h1V-38.4h1V-43.1h1V-21.1h1V-33.9h1V-44.9h1V-21.1h1V-20.5h1V-43.6h1V-39.9h1V-25.2h1V-23.6h1V-40.7h1V-39.5h1V-23.2h1V-30.1h1V-22.5h1V-19.4h1V-20h1V-22.3h1V-18.4h1V-34.9h1V-40.3h1V-36.8h1V-21.9h1V-22.2h1V-21h1V-23.3h1V-22.6h1V-18.9h1V-19.9h1V-31.7h1V-22.2h1V-19.8h1V-18.2h1V-17.1h1V-20.4h1V-22h1V-14.6h1V-32.4h1V-22.4h1V-15.7h1V-19.2h1V-14.2h1V-18.2h1V-30.6h1V-28.3h1V-30.6h1V-26.5h1V-20.2h1V-24.3h1V-15.6h1V-21.8h1V-18.3h1V-27.1h1V-33h1V-34.8h1V-32.6h1V-25.3h1V-38.2h1V-35.1h1V-26.9h1V-35.9h1V-27.7h1V-30.8h1V-23.9h1V-33.9h1V-20h1V-17.1h1V-21.8h1V-20.2h1V-35.8h1V-20.4h1V-23.1h1V-20.6h1V-22.6h1V-29.1h1V-21.4h1V-32.5h1V-24.7h1V-22.5h1V-23.5h1V-30.5h1V-24.7h1V-37.8h1V-30.1h1V-34.9h1V-37.6h1V-34.8h1V-44.1h1V-46.2h1V-38.5h1V-40.3h1V-39.7h1V-22.6h1V-32.4h1V-44.3h1V-31.7h1V-35.6h1V-40h1V-22.6h1V-32.6h1V-29.9h1V-26.1h1V-25.4h1V-24.8h1V-40.8h1V-25.7h1V-31h1V-27.3h1V-36.1h1V-28.3h1V-30.1h1V-32.8h1V-20.6h1V-34h1V-20.5h1V-34.3h1V-35.9h1V-30.4h1V-24.5h1V-26.7h1V-37.4h1V-25.2h1V-24.5h1V-26.2h1V-24.9h1V-24.4h1V-22.3h1V-26.9h1V-29.1h1V-27.3h1V-24.5h1V-33.9h1V-21.8h1V-34h1V-34.1h1V-29h1V-30.3h1V-32.8h1V-28.7h1V-29.9h1V-24.4h1V-24h1V-31.1h1V-22.4h1V-27.4h1V-28.1h1V-21.2h1V-12.7h1V-29.4h1V-24.4h1V-29.5h1V-28h1V-25.3h1V-24.8h1V-23.1h1V-22.2h1V-12.2h1V-15h1V-20.2h1V-18.7h1V-17h1V-18h1V-19.6h1V-14.3h1V-10.8h1V-21h1V-19.2h1V-14.4h1V-10.3h1V-14.9h1V-16.3h1V-16.7h1V-17h1V-19.8h1V-23.6h1V-23.8h1V-31.3h1V-34.9h1V-26.3h1V-37.1h1V-29.5h1V-31.4h1V-29.4h1V-25.9h1V-25.3h1V-27.2h1V-27h1V-20.7h1V-21.2h1V-18.4h1V-26.8h1V-23.3h1V-23.3h1V-24.5h1V-25.1h1V-26.9h1V-28.4h1V-20.9h1V-22.2h1V-26.8h1V-27h1V-26.7h1V-14.3h1V-26.6h1V-28h1V-34.2h1V-30.1h1V-28.7h1V-32.6h1V-25h1V-24.1h1V-30.9h1V-20.7h1V-26.3h1V-36.3h1V-21.9h1V-15h1V-28.2h1V-22.5h1V-38.6h1V-23.3h1V-22.5h1V-23.1h1V-38.5h1V-28.8h1V-14.7h1V-32.1h1V-25.2h1V-22.3h1V-21.4h1V-32.8h1V-32.8h1V-22h1V-18.3h1V-21.2h1V-21.6h1V-22.7h1V-20.3h1V-17.4h1V-24.5h1V-32.2h1V-17.8h1V-20.1h1V-24.7h1V-17.1h1V-27.7h1V-26.7h1V-28.4h1V-32.5h1V-23.3h1V-21.9h1V-15.2h1V-16.7h1V-21.7h1V-29.4h1V-20.5h1V-25h1V-29.7h1V-17.8h1V-17.5h1V-16.4h1V-15.1h1V-17.6h1V-30.4h1V-22.1h1V-20.4h1V-18.7h1V-18h1V-20.1h1V-18.1h1V-16.1h1V-19.8h1V-24.3h1V-22.2h1V-14h1V-27.2h1V-19.3h1V-20.9h1V-22.3h1V-16.7h1V-12.5h1V-20h1V-36.2h1V-22.3h1V-34.1h1V-17.8h1V-19.7h1V-19.8h1V-21.6h1V-39.2h1V-26h1V-25.3h1V-24.6h1V-32.3h1V-11.4h1V-13.5h1V-12.9h1V-27.3h1V-21.6h1V-14.5h1V-13.4h1V-18.5h1V-21.2h1V-17.3h1V-17.1h1V-15.5h1V-9.4h1V-12.2h1V-6.9h1V-13.8h1V-14.9h1V-18.7h1V-18.1h1V-22.1h1V-22.8h1V-24.4h1V-17.5h1V-25.1h1V-20.5h1V-26.8h1V-21.7h1V-31.4h1V-31.8h1V-34.1h1V-33.7h1V-31.1h1V-34.5h1V-31h1V-27.8h1V-25.3h1V-36.4h1V-29.6h1V-28.3h1V-26.7h1V-26.1h1V-27.1h1V-26.9h1V-25.4h1V-23.6h1V-16.8h1V-22.4h1V-32.4h1V-26.2h1V-18.8h1V-24.8h1V-23h1V-24.5h1V-27.4h1V-42.4h1V-29.7h1V-29.1h1V-47.7h1V-30.4h1V-27.8h1V-24.3h1V-35.8h1V-30.7h1V-30.9h1V-30h1V-31.7h1V-38.1h1V-26h1V-40.4h1V-27.5h1V-30.6h1V-33.3h1V-36.2h1V-38.1h1V-38.5h1V-43.3h1V-49.9h1V-43.2h1V-40h1V-49.7h1V-43.7h1V-40.8h1V-47.6h1V-38.7h1V-48.8h1V-39.8h1V-40.1h1V-43.2h1V-29.4h1V-33h1V-36.7h1V-31.3h1V-31.3h1V-34.8h1V-37.1h1V-33.9h1V-30.7h1V-29.5h1V-31.4h1V-33.8h1V-32.2h1V-30.1h1V-32.1h1V-38.9h1V-39.5h1V-23.9h1V-37.3h1V-29h1V-30.6h1V-31h1V-29.8h1V-29.9h1V-44.6h1V-42.1h1V-27.3h1V-28.3h1V-27.7h1V-28.6h1V-26.5h1V-32.7h1V-39.5h1V-40.2h1V-38h1V-43.6h1V-39.8h1V-36.8h1V-30.4h1V-36.7h1V-26.8h1V-28.8h1V-39.7h1V-35.9h1V-19h1V-37.8h1V-25h1V-29h1V-34.8h1V-31.3h1V-21.7h1V-15.8h1V-18h1V-27.5h1V-22.9h1V-20.6h1V-18.6h1V-20.5h1V-29.8h1V-23.5h1V-21h1V-35.7h1V-19.2h1V-21.2h1V-23.1h1V-23.8h1V-23.1h1V-30.1h1V-25.5h1V-25.7h1V-16.4h1V-22.3h1V-24.8h1V-27.8h1V-31.2h1V-27.8h1V-25.4h1V-22.5h1V-19.1h1V-19.3h1V-36.7h1V-27h1V-37.9h1V-22.7h1V-27.6h1V-31.8h1V-29.7h1V-37.6h1V-25.5h1V-25.4h1V-38.5h1V-25.6h1V-20.2h1V-25.9h1V-28h1V-23.5h1V-17.4h1V-48.7h1V-17.7h1V-23.1h1V-22.7h1V-30.6h1V-35.4h1V-36.9h1V-44.7h1V-47.8h1V-20.1h1V-22.4h1V-25.2h1V-44.8h1V-23.4h1V-22.7h1V-33.6h1V-24.3h1V-25.6h1V-46.9h1V-18.4h1V-37.6h1V-24h1V-27.7h1V-46.5h1V-29.7h1V-28.8h1V-37.4h1V-40.3h1V-35.2h1V-40.4h1V-21.8h1V-28.3h1V-32.1h1V-41.1h1V-40.2h1V-35.1h1V-37.1h1V-33.9h1V-29.2h1V-38.7h1V-24.8h1V-37.9h1V-30.3h1V-29.3h1V-24.4h1V-23.4h1V-33.3h1V-27.8h1V-26.5h1V-16.4h1V-22.9h1V-34.4h1V-27.9h1V-26.6h1V-24.3h1V-27.4h1V-29h1V-19.4h1V-41.8h1V-36.7h1V-38.4h1V-37.2h1V-27.7h1V-27.4h1V-29.6h1V-28.9h1V-25h1V-26.6h1V-41.1h1V-38.1h1V-24.8h1V-23.2h1V-46.6h1V-25.2h1V-37.9h1V-25.7h1V-25.8h1V-36.6h1V-26.5h1V-25.8h1V-24.5h1V-33.3h1V-27.8h1V-37.9h1V-35.3h1V-37.1h1V-40.2h1V-40h1V-37.6h1V-24.9h1V-25.8h1V-34.7h1V-34h1V-30.6h1V-43h1V-39.1h1V-28.2h1V-46.4h1V-36.1h1V-26.6h1V-26.2h1V-42.9h1V-43.3h1V-26.2h1V-29.7h1V-28h1V-33.6h1V-28.6h1V-39.5h1V-33.2h1V-22.8h1V-35.6h1V-21.9h1V-19.1h1V-16.5h1V-16.5h1V-18.2h1V-16h1V-23.7h1V-21.4h1V-27.5h1V-22.6h1V-26.1h1V-29.8h1V-35.2h1V-39.4h1V-30.2h1V-28.4h1V-44h1V-33.4h1V-29.2h1V-38.1h1V-41.3h1V-37.1h1V-39.8h1V-28.6h1V-44.5h1V-42.2h1V-24.2h1V-36.5h1V-36.6h1V-42.2h1V-34h1V-36.5h1V-42.3h1V-35.5h1V-31.7h1V-36.1h1V-50h1V-41.1h1V-36.1h1V-41.4h1V-31.3h1V-30.6h1V-39.9h1V-42h1V-28.1h1V-40.2h1V-32h1V-34.3h1V-17.5h1V-28.5h1V-25.1h1V-22.4h1V-16.2h1V-15.6h1V-16.2h1V-14.5h1V-18h1V-28h1V-21.3h1V-20.6h1V-20.4h1V-19.4h1V-25.1h1V-21h1V-26.8h1V-27.1h1V-27h1V-34.2h1V-30.7h1V-26.8h1V-28.4h1V-23.4h1V-40.7h1V-25.4h1V-32.7h1V-23.9h1V-17.9h1V-25.8h1V-22.6h1V-18.2h1V-22.2h1V-31.4h1V-22.1h1V-24.8h1V-22.2h1V-25.7h1V-18.4h1V-21.9h1V-19.2h1V-23.8h1V-27.7h1V-24h1V-13.9h1V-12.9h1V-22.5h1V-29h1V-18.8h1V-15.8h1V-19.3h1V-23.3h1V-26.3h1V-38.9h1V-32.8h1V-31.1h1V-38h1V-35.3h1V-31.7h1V-31.9h1V-34.8h1V-37h1V-41.1h1V-37h1V-34h1V-31.4h1V-27.1h1V-31h1V-43.4h1V-37.2h1V-30.9h1V-38.7h1V-34.7h1V-31.8h1V-28.2h1V-28.9h1V-32.7h1V-30.4h1V-27h1V-21.4h1V-37.3h1V-29.8h1V-20.6h1V-34.3h1V-24.2h1V-35.5h1V-28.9h1V-20.5h1V-25h1V-21.1h1V-18.5h1V-26.4h1V-26.3h1V-22h1V-15.8h1V-15.8h1V-19.6h1V-23.8h1V-20.2h1V-21.7h1V-22.9h1V-35.2h1V-32.7h1V-26.9h1V-37h1V-35.1h1V-20.8h1V-26.6h1V-24.6h1V-26.3h1V-32.4h1V-29.6h1V-39.9h1V-28.3h1V-30.9h1V-42.9h1V-45.7h1V-31.9h1V-26.8h1V-38.9h1V-42h1V-46.9h1V-43.8h1V-42.3h1V-25.6h1V-28.6h1V-26h1V-29.6h1V-47.1h1V-44.7h1V-28h1V-48.5h1V-28.4h1V-31.3h1V-45.3h1V-35.7h1V-28h1V-26.5h1V-19.6h1V-26.4h1V-34.2h1V-20.9h1V-18.5h1V-26h1V-34.1h1V-39.7h1V-20.9h1V-28.3h1V-25.3h1V-32h1V-37h1V-32.7h1V-45.8h1V-29.8h1V-32.2h1V-35.3h1V-23.2h1V-39.9h1V-39.7h1V-37.8h1V-39.5h1V-39.9h1V-39.9h1V-33h1V-22.3h1V-37.7h1V-31.8h1V-36.5h1V-32.5h1V-24.7h1V-34.1h1V-36.9h1V-32h1V-32.7h1V-40.4h1V-23.2h1V-24.6h1V-30.6h1V-35.3h1V-30.2h1V-30.6h1V-32.7h1V-24.7h1V-20.8h1V-21.5h1V-21h1V-19.3h1V-17.1h1V-26.8h1V-18.1h1V-20.8h1V-24.4h1V-27.4h1V-26.4h1V-21.7h1V-27.7h1V-31.6h1V-49h1V-30.2h1V-33.9h1V-45h1V-51.5h1V-31.6h1V-32.2h1V-29.4h1V-27.5h1V-27.1h1V-42.9h1V-49.8h1V-20.4h1V-44.4h1V-22h1V-20.2h1V-27.5h1V-23.3h1V-33.3h1V-25.2h1V-39.4h1V-29.4h1V-24h1V-22.3h1V-28.1h1V-32.1h1V-32.6h1V-33.6h1V-35.7h1V-35.4h1V-32.2h1V-19.2h1V-24.5h1V-23.1h1V-21.9h1V-28.7h1V-23.3h1V-31.9h1V-36h1V-37.3h1V-19h1V-38.9h1V-40.8h1V-26.8h1V-31.1h1V-47.4h1V-34.7h1V-28.6h1V-40.7h1V-29.1h1V-45.4h1V-40.3h1V-38.1h1V-27.4h1V-33.9h1V-35.1h1V-44.3h1V-23.8h1V-41.5h1V-31.5h1V-42.8h1V-38.3h1V-45.7h1V-32.7h1V-38.5h1V-37.6h1V-42.3h1V-45.8h1V-35.5h1V-34h1V-52.2h1V-46.9h1V-35.5h1V-35h1V-39.3h1V-47.4h1V-31.4h1V-49.4h1V-34.1h1V-21.8h1V-31.6h1V-35.1h1V-32h1V-34.2h1V-35.1h1V-32.7h1V-36.6h1V-37h1V-41.9h1V-30.1h1V-41.4h1V-39.8h1V-27.2h1V-24.1h1V-39h1V-41.7h1V-40.1h1V-42.9h1V-27.4h1V-26.8h1V-28.3h1V-24.5h1V-44h1V-22.1h1V-36.9h1V-45.2h1V-46.5h1V-31.9h1V-43h1V-29.6h1V-23.9h1V-38.9h1V-44.6h1V-44.5h1V-22.4h1V-27.3h1V-33.4h1V-39.3h1V-21.4h1V-30.2h1V-36.5h1V-41.2h1V-45.9h1V-22.8h1V-24.8h1V-29.1h1V-44.9h1V-29.3h1V-28.1h1V-31.4h1V-44.9h1V-31.1h1V-31.6h1V-34.1h1V-30h1V-27h1V-29.9h1V-31.2h1V-29h1V-27.6h1V-44h1V-38.2h1V-40.5h1V-37h1V-27.8h1V-26h1V-43.4h1V-30.2h1V-29.7h1V-20h1V-24.9h1V-23.5h1V-24.7h1V-35.1h1V-24.1h1V-26.3h1V-23.6h1V-24.4h1V-25.4h1V-24.3h1V-29.1h1V-19.8h1V-17.9h1V-33.2h1V-23.5h1V-24.2h1V-27.9h1V-18.9h1V-31.8h1V-16.9h1V-33.4h1V-35.5h1V-22.1h1V-20.7h1V-26.6h1V-28.8h1V-26.4h1V-30.5h1V-25h1V-26.8h1V-34h1V-39.8h1V-21h1V-39.6h1V-41.9h1V-42h1V-25h1V-26.6h1V-28.2h1V-28.7h1V-26h1V-35h1V-39.1h1V-25.3h1V-39.6h1V-27.8h1V-25.6h1V-23.5h1V-29.3h1V-34.7h1V-38.3h1V-35.2h1V-46.6h1V-25.7h1V-31.9h1V-32.7h1V-44.7h1V-28.5h1V-26.3h1V-30.3h1V-34.5h1V-49.2h1V-21.5h1V-34.1h1V-39.1h1V-39.5h1V-32.7h1V-45h1V-48.9h1V-30.1h1V-42.7h1V-31.1h1V-39.1h1V-29.9h1V-37.9h1V-44.6h1V-33.8h1V-39h1V-35.5h1V-31.1h1V-31h1V-32.3h1V-33.5h1V-23.4h1V-25.1h1V-22.3h1V-40.9h1V-40.1h1V-34.5h1V-19.1h1V-35.5h1V-23h1V-24.5h1V-21.8h1V-16.9h1V-23.8h1V-25.9h1V-25.3h1V-22h1V-31.2h1V-23.1h1V-21.3h1V-20.1h1V-20.9h1V-17.1h1V-37.3h1V-31.1h1V-21.7h1V-20.5h1V-22.4h1V-23.6h1V-22.3h1V-23.9h1V-20.9h1V-24.3h1V-26.5h1V-20.6h1V-22.4h1V-20.4h1V-20.5h1V-32.7h1V-20.7h1V-31.3h1V-18.2h1V-19.2h1V-19.8h1V-19.5h1V-18.8h1V-16.6h1V-18.2h1V-18.2h1V-16.4h1V-33.9h1V-29.8h1V-21.8h1V-26.1h1V-27.4h1V-25.2h1V-20.8h1V-28.1h1V-19.2h1V-15.3h1V-17.8h1V-20.6h1V-22.6h1V-29.8h1V-28.4h1V-18.4h1V-13.6h1V-19.9h1V-18.1h1V-16.2h1V-13.2h1V-16.5h1V-10.9h1V-15.1h1V-15.5h1V-18h1V-11.8h1V-22.1h1V-18.8h1V-17.1h1V-20.6h1V-27.8h1V-20.1h1V-16.3h1V-26.9h1V-27.5h1V-31.6h1V-32.1h1V-32.7h1V-32.5h1V-32.9h1V-18h1V-24.4h1V-26.8h1V-29.2h1V-32.5h1V-28.7h1V-25.5h1V-32.9h1V-42.7h1V-34.4h1V-31.6h1V-35.5h1V-35.7h1V-31.2h1V-25.8h1V-45h1V-44.4h1V-37.4h1V-34.6h1V-31.2h1V-26.5h1V-50.4h1V-43.5h1V-43.3h1V-37.4h1V-33.3h1V-54.5h1V-23.8h1V-45.6h1V-44.9h1V-29h1V-27.5h1V-23.6h1V-56.4h1V-28.7h1V-29.2h1V-58.2h1V-24.6h1V-32.6h1V-39.6h1V-35.2h1V-29.8h1V-33.4h1V-36.8h1V-40.6h1V-37h1V-47.6h1V-37h1V-38.4h1V-40.5h1V-32.9h1V-31.7h1V-28.5h1V-35.3h1V-38.3h1V-45.2h1V-37.7h1V-28.3h1V-30.2h1V-43.8h1V-21.1h1V-26.5h1V-25.6h1V-26h1V-21.4h1V-48h1V-24.2h1V-45.6h1V-26.3h1V-27.7h1V-29.6h1V-29.3h1V-46.9h1V-27h1V-29.4h1V-31.5h1V-40.6h1V-40.2h1V-44.9h1V-44.4h1V-25.8h1V-30.5h1V-30.2h1V-33.5h1V-36.8h1V-48.5h1V-41.2h1V-47.9h1V-36.7h1V-45.4h1V-39.4h1V-41.2h1V-32h1V-38.4h1V-52.1h1V-42h1V-25.7h1V-44h1V-51.1h1V-39.2h1V-38.3h1V-37h1V-36h1V-47.7h1V-51.6h1V-46.8h1V-49.3h1V-36.3h1V-45.3h1V-34.8h1V-30.8h1V-54.4h1V-43.9h1V-31.4h1V-30h1V-26h1V-22.8h1V-29.7h1V-49.7h1V-49.5h1V-20.8h1V-27.7h1V-29h1V-28h1V-28.1h1V-56.3h1V-21.3h1V-28.2h1V-26.8h1V-24.6h1V-31.4h1V-33.5h1V-35.7h1V-31h1V-27.3h1V-29h1V-43.5h1V-33.1h1V-25.3h1V-43.5h1V-29.6h1V-29.5h1V-34.5h1V-50.7h1V-31.7h1V-44.3h1V-26.8h1V-42.5h1V-33.7h1V-35.1h1V-27.5h1V-29.8h1V-38.4h1V-44.7h1V-49.3h1V-51.5h1V-29.5h1V-32.7h1V-32.9h1V-48.4h1V-48.7h1V-48.3h1V-32.3h1V-46.4h1V-49.1h1V-30.3h1V-25.1h1V-45.2h1V-20.7h1V-20.1h1V-16h1V-29.1h1V-14.1h1V-26.3h1V-36.2h1V-34h1V-35.9h1V-36.4h1V-39.4h1V-40h1V-40.2h1V-39.9h1V-53.4h1V-31.6h1V-49.1h1V-32.3h1V-35.5h1V-40.1h1V-29.3h1V-35h1V-35.3h1V-36.5h1V-37.9h1V-35.5h1V-34.1h1V-49.7h1V-32.7h1V-34.7h1V-36.9h1V-44.8h1V-27h1V-32h1V-28.2h1V-32.8h1V-46.7h1V-29.9h1V-38.9h1V-44.9h1V-34h1V-47.1h1V-36.2h1V-32.2h1V-28.2h1V-29h1V-29.8h1V-26.3h1V-37.4h1V-20.1h1V-23.2h1V-21.8h1V-33.7h1V-34.2h1V-31.2h1V-33.3h1V-40.9h1V-42h1V-31.5h1V-31.3h1V-26.8h1V-25.2h1V-21.4h1V-17.9h1V-27.1h1V-27.4h1V-45.2h1V-23.7h1V-23.3h1V-26.8h1V-23.1h1V-27.4h1V-24.2h1V-21.1h1V-20.8h1V-36.4h1V-45.3h1V-23.2h1V-60.9h1V-17.3h1V-39.2h1V-55.8h1V-39.4h1V-20.7h1V-18.2h1V-21.5h1V-24.7h1V-28.1h1V-26.1h1V-24h1V-30.3h1V-33.5h1V-27.3h1V-26.2h1V-28.5h1V-38.4h1V-27.3h1V-17.9h1V-30.1h1V-30.5h1V-34.1h1V-33h1V-30.2h1V-22.3h1V-24.1h1V-23.3h1V-41.2h1V-22.5h1V-25.2h1V-29.5h1V-45.5h1V-46.3h1V-47.2h1V-40.7h1V-27h1V-48.4h1V-32.4h1V-30.6h1V-25.9h1V-37.9h1V-26.7h1V-40.6h1V-26.2h1V-18.4h1V-22.1h1V-23.9h1V-41.3h1V-29.9h1V-43.1h1V-27.6h1V-38.3h1V-28.5h1V-30.2h1V-46.8h1V-38.6h1V-29.7h1V-32.6h1V-50.1h1V-46.3h1V-37.9h1V-34.5h1V-30.4h1V-34.4h1V-45.6h1V-38.7h1V-27.4h1V-37.3h1V-48.2h1V-42.9h1V-38.1h1V-33.5h1V-28.9h1V-33.6h1V-37.2h1V-40.9h1V-34h1V-27.6h1V-22.1h1V-34.8h1V-34.3h1V-17.7h1V-21h1V-17.9h1V-26.1h1V-27.5h1V-24.6h1V-18.4h1V-18.2h1V-16.1h1V-18.6h1V-16.5h1V-36.3h1V-23.9h1V-33.3h1V-30.8h1V-20.8h1V-40.1h1V-40.2h1V-42.7h1V-21.1h1V-19.8h1V-17.1h1V-33.5h1V-36.2h1V-16.4h1V-31.8h1V-30.2h1V-21.4h1V-38h1V-29h1V-35.6h1V-16.7h1V-19h1V-20.7h1V-22h1V-31.8h1V-17h1V-17.8h1V-12.8h1V-16.1h1V-14.8h1V-11.6h1V-16.2h1V-14.2h1V-11.1h1V-12.5h1V-24.5h1V-26.2h1V-14.3h1V-13.7h1V-11.3h1V-13.5h1V-14.2h1V-15.5h1V-25.9h1V-24.7h1V-25.7h1V-24.1h1V-23.8h1V-12.6h1V-13.9h1V-19.1h1V-18h1V-16.5h1V-18.2h1V-27.5h1V-27.4h1V-17.2h1V-15.7h1V-16.7h1V-17.1h1V-17h1V-27.2h1V-15.1h1V-14.9h1V-17.2h1V-16.5h1V-11.3h1V-14.4h1V-26.7h1V-21.1h1V-14h1V-9.6h1V-12.7h1V-12.8h1V-20.8h1V-12.8h1V-13.1h1V-16.6h1V-16.8h1V-21.8h1V-20.9h1V-18.9h1V-27.1h1V-53.1h1V-26.4h1V-25.8h1V-28.4h1V-40.1h1V-37.1h1V-38.9h1V-47.2h1V-38.5h1V-40.7h1V-36.2h1V-18.1h1V-32.7h1V-20.2h1V-37.7h1V-42.6h1V-43.9h1V-41.1h1V-28.1h1V-40.2h1V-44.4h1V-40h1V-60.4h1V-26.9h1V-41.7h1V-54.7h1V-56.8h1V-32.1h1V-38.6h1V-44.1h1V-55.9h1V-43.1h1V-46.2h1V-47.6h1V-50.7h1V-45.6h1V-40.5h1V-58.1h1V-29.3h1V-41.4h1V-42.3h1V-38.3h1V-35.5h1V-33h1V-33.5h1V-34.8h1V-25.8h1V-31.2h1V-27.7h1V-26.5h1V-35.8h1V-30.2h1V-26.5h1V-35.1h1V-42.3h1V-38.1h1V-23.4h1V-28.3h1V-21.2h1V-23.4h1V-22.2h1V-35.4h1V-18.6h1V-31.8h1V1z"/></defs><g transform="translate(0,81.5)"><g filter="url(#wb2)"><use href="#ovw" fill="#4f5162" transform="scale(1,-1)"/></g><g filter="url(#wb2)"><use href="#ovw" fill="#464c5b"/></g></g></svg></div>
<div id="ovline"></div>
<div id="ovside"><div class="grip"></div></div>
<div style="position:absolute;left:2559.5px;top:260px;width:0;height:0;transform:rotate(90deg)"><div style="position:absolute;left:-20.0px;top:0"><svg class="tx" role="img" aria-label="轨道" style="left:0.0px;top:-10.2px" width="42.0" height="25.0" fill="#111"><text x="0" y="17.6" font-size="20" font-weight="bold">轨道</text></svg></div></div>
<div id="strip"></div><div id="stripr"><div class="up"></div><div class="dn"></div></div>
<div id="th"></div>
<div class="tri" style="left:89px;top:427px"></div>
<div id="tname"></div>
<svg class="tx" role="img" aria-label="音轨名称" style="left:132.0px;top:420.3px" width="90.0" height="27.5" fill="#b4b4b4"><text x="0" y="19.36" font-size="22">音轨名称</text></svg>
<svg class="tx" role="img" aria-label="音量:" style="left:425.0px;top:424.6px" width="44.9" height="21.9" fill="#fff"><text x="0" y="15.40" font-size="17.5" font-weight="bold">音量</text><text style="white-space:pre" x="36.23" y="15.40" font-size="17.50" font-weight="bold">:</text></svg>
<div class="sl" style="left:483px;top:430px;width:225px;background:#555"></div><div class="kn" style="left:698px;top:424px;width:19px;height:19px"></div>
<div id="thcb"><svg width="18" height="18" viewBox="0 0 18 18"><path d="M4 9.5l3.5 4L14 4.5" fill="none" stroke="#111" stroke-width="2.6" stroke-linecap="round" stroke-linejoin="round"/></svg></div>
<svg class="tx" role="img" aria-label="播放" style="left:761.0px;top:424.6px" width="37.0" height="21.9" fill="#fff"><text x="0" y="15.40" font-size="17.5" font-weight="bold">播放</text></svg>
<svg class="tx" role="img" aria-label="播放:" style="left:2351.0px;top:424.6px" width="44.9" height="21.9" fill="#fff"><text x="0" y="15.40" font-size="17.5" font-weight="bold">播放</text><text style="white-space:pre" x="36.23" y="15.40" font-size="17.50" font-weight="bold">:</text></svg>
<div id="thpop"></div>
<svg class="tx" role="img" aria-label="前方" style="left:2430.0px;top:424.6px" width="37.0" height="21.9" fill="#111"><text x="0" y="15.40" font-size="17.5">前方</text></svg>
<svg class="tx" style="left:2489px;top:423px" width="14" height="22" viewBox="0 0 14 22"><path d="M2.5 8.5L7 4l4.5 4.5M2.5 13.5L7 18l4.5-4.5" fill="none" stroke="#222" stroke-width="1.8" stroke-linecap="round" stroke-linejoin="round"/></svg>
<svg class="tx" style="left:2524px;top:410px" width="40" height="40" viewBox="-20 -20 40 40"><defs><linearGradient id="sg" x1="0" y1="0" x2="0" y2="1"><stop offset="0" stop-color="#dfe8f6"/><stop offset="1" stop-color="#8fa3c4"/></linearGradient></defs><path d="M13.0 -2.2L17.1 -1.9L17.1 1.9L13.0 2.2L12.4 4.6L15.7 6.9L13.9 10.2L10.2 8.4L8.4 10.2L10.2 13.9L6.9 15.7L4.6 12.4L2.2 13.0L1.9 17.1L-1.9 17.1L-2.2 13.0L-4.6 12.4L-6.9 15.7L-10.2 13.9L-8.4 10.2L-10.2 8.4L-13.9 10.2L-15.7 6.9L-12.4 4.6L-13.0 2.2L-17.1 1.9L-17.1 -1.9L-13.0 -2.2L-12.4 -4.6L-15.7 -6.9L-13.9 -10.2L-10.2 -8.4L-8.4 -10.2L-10.2 -13.9L-6.9 -15.7L-4.6 -12.4L-2.2 -13.0L-1.9 -17.1L1.9 -17.1L2.2 -13.0L4.6 -12.4L6.9 -15.7L10.2 -13.9L8.4 -10.2L10.2 -8.4L13.9 -10.2L15.7 -6.9L12.4 -4.6z" fill="url(#sg)" stroke="#7d8fae" stroke-width=".8"/><circle r="9.5" fill="#9c9c9c" stroke="#7f92b3" stroke-width="1.2"/><circle r="6.5" fill="#a3a3a3" stroke="#b9c6dc" stroke-width="1"/></svg>
<div id="main"></div>
<div id="wf"><svg width="2446" height="1513" viewBox="0 0 2446 1513"><defs><path id="wv" d="M-1 1V-61.7h1V-77.1h1V-98.6h1V-68.5h1V-67h1V-75.5h1V-96.5h1V-110.2h1V-74.6h1V-63.6h1V-55.7h1V-78.3h1V-74.7h1V-115.5h1V-151.1h1V-152h1V-168h1V-184h1V-200h1V-184h1V-168h1V-152h1V-152.1h1V-115.5h1V-95.4h1V-89.7h1V-100.1h1V-94.7h1V-106.6h1V-75.4h1V-101.7h1V-136.8h1V-116.6h1V-135.5h1V-73.2h1V-84.4h1V-66.6h1V-75.1h1V-68.9h1V-54.5h1V-63.7h1V-78.3h1V-128.9h1V-84.9h1V-75.6h1V-70.5h1V-58.2h1V-84.2h1V-72.2h1V-64.8h1V-59h1V-80h1V-107.1h1V-145h1V-107.6h1V-79.3h1V-58.3h1V-50.7h1V-72.5h1V-60h1V-47.6h1V-57h1V-47.9h1V-56.5h1V-71.7h1V-98.7h1V-65.4h1V-46.1h1V-50.1h1V-57.3h1V-117.5h1V-53.6h1V-35.4h1V-47.8h1V-51.2h1V-55.9h1V-47h1V-49.6h1V-61.4h1V-64.4h1V-49.9h1V-48.4h1V-52.4h1V-89.7h1V-81.9h1V-53.1h1V-120.6h1V-57.7h1V-53.4h1V-48.1h1V-47.9h1V-65.5h1V-89.5h1V-43.3h1V-58.4h1V-50.3h1V-71.6h1V-43.8h1V-59.4h1V-59h1V-53.8h1V-110h1V-35.1h1V-40.4h1V-40.6h1V-44.4h1V-37.3h1V-43h1V-108.2h1V-56.7h1V-41.5h1V-29.6h1V-26.9h1V-37.2h1V-42.9h1V-39.5h1V-37.1h1V-40.5h1V-47.2h1V-101.1h1V-52.8h1V-79.7h1V-49.3h1V-47.3h1V-65.9h1V-67.8h1V-38.3h1V-50.4h1V-104.9h1V-47.5h1V-41.9h1V-43.9h1V-38.5h1V-36.4h1V-44.9h1V-103h1V-45.5h1V-89.7h1V-44.2h1V-39.4h1V-47.4h1V-105.7h1V-107.6h1V-44h1V-90.2h1V-60.8h1V-39.4h1V-40.1h1V-37.7h1V-45.5h1V-43h1V-44.6h1V-34.9h1V-89.5h1V-38.5h1V-43.8h1V-60h1V-41h1V-87.4h1V-44.1h1V-40h1V-92.7h1V-42h1V-43.1h1V-73.1h1V-39.5h1V-40.9h1V-39.2h1V-40h1V-39.2h1V-41.7h1V-50.3h1V-63.9h1V-42.7h1V-40.5h1V-52.9h1V-55.9h1V-55.1h1V-47.3h1V-42.8h1V-56.1h1V-58.6h1V-51.5h1V-56.6h1V-66.2h1V-116.9h1V-66.7h1V-66.3h1V-60.6h1V-113.4h1V-70.9h1V-85.2h1V-87.5h1V-55.1h1V-45.8h1V-40.1h1V-43.4h1V-58.2h1V-8.4h1V-3.3h1V-3.2h1V-22.6h1V-35.3h1V-29.4h1V-37.2h1V-42.3h1V-41.6h1V-68.6h1V-50.4h1V-40.6h1V-48h1V-82.6h1V-51.3h1V-47.3h1V-46.1h1V-52.4h1V-44.4h1V-55.6h1V-72.6h1V-56.1h1V-67.3h1V-115.7h1V-85.3h1V-81.2h1V-60h1V-64.5h1V-112.8h1V-60.7h1V-58.1h1V-75.9h1V-136.4h1V-62.7h1V-70.9h1V-67.6h1V-61.6h1V-73.3h1V-63.9h1V-63.6h1V-61.7h1V-66.7h1V-59.2h1V-61.4h1V-44.7h1V-31.6h1V-48.6h1V-66.6h1V-73.5h1V-64.1h1V-69h1V-64.7h1V-80.4h1V-133.2h1V-75.4h1V-63.6h1V-69.6h1V-67.8h1V-92.8h1V-67.7h1V-56.2h1V-45.6h1V-52.2h1V-75.7h1V-137.3h1V-75h1V-59.8h1V-72.5h1V-111.6h1V-56h1V-67.4h1V-81.8h1V-148.4h1V-125.4h1V-134.5h1V-85.2h1V-76.2h1V-102.7h1V-74.1h1V-73.7h1V-74.6h1V-79.7h1V-102.3h1V-76.2h1V-73.2h1V-78h1V-78.2h1V-68.5h1V-99.9h1V-95.4h1V-81.1h1V-79.5h1V-59.1h1V-81.7h1V-126.2h1V-134.6h1V-79.6h1V-57.9h1V-55.8h1V-51.4h1V-78.1h1V-97.9h1V-67.8h1V-51.8h1V-66h1V-73.4h1V-128.6h1V-82.6h1V-60.6h1V-59.5h1V-63.2h1V-77.1h1V-130.1h1V-66.7h1V-66h1V-137.1h1V-48.7h1V-58.7h1V-48.6h1V-59.7h1V-54.5h1V-52.7h1V-59h1V-51.4h1V-38.7h1V-46.7h1V-44.7h1V-39.2h1V-51.4h1V-52.2h1V-40.6h1V-57.3h1V-65.9h1V-73.9h1V-59.9h1V-66.4h1V-88.3h1V-147.5h1V-77.5h1V-58.2h1V-68.7h1V-70.5h1V-101.7h1V-81.7h1V-96.6h1V-142h1V-88.6h1V-63.3h1V-94.9h1V-152.2h1V-97.7h1V-78.4h1V-77.2h1V-84.1h1V-91.3h1V-106.9h1V-75.7h1V-84.3h1V-68.5h1V-83.9h1V-92.9h1V-92.9h1V-107.4h1V-165.6h1V-77h1V-89.1h1V-71.1h1V-89.3h1V-110.4h1V-168h1V-98.3h1V-85.5h1V-119.2h1V-151.1h1V-195h1V-148.4h1V-118.6h1V-105h1V-98.6h1V-116.7h1V-149.3h1V-122.9h1V-113.6h1V-82.5h1V-97.5h1V-85.7h1V-100h1V-136.5h1V-98.6h1V-116.7h1V-98h1V-141h1V-119.4h1V-101.1h1V-102.5h1V-129.6h1V-78.1h1V-96.1h1V-72.9h1V-177.8h1V-117.5h1V-68.9h1V-46.4h1V-64.1h1V-83.3h1V-89.3h1V-105.9h1V-136.6h1V-160.7h1V-107.2h1V-118.9h1V-141.5h1V-195h1V-141.1h1V-105.2h1V-72.4h1V-75.4h1V-83.4h1V-79h1V-71.3h1V-67.9h1V-63.1h1V-51h1V-68.1h1V-71.9h1V-74.2h1V-76h1V-104.7h1V-79.1h1V-74.8h1V-84.5h1V-65.1h1V-69.7h1V-45.7h1V-67.3h1V-68h1V-64.9h1V-65.6h1V-101h1V-81.4h1V-65.9h1V-85.6h1V-76.9h1V-151.4h1V-91.9h1V-150h1V-96.9h1V-169.8h1V-94.4h1V-168.1h1V-108h1V-82.1h1V-68.1h1V-63.2h1V-84.4h1V-103.7h1V-89.6h1V-154.5h1V-133.7h1V-129.8h1V-140.2h1V-175.3h1V-142.9h1V-96.2h1V-127.5h1V-150.7h1V-128h1V-127.5h1V-144.2h1V-180.1h1V-148.6h1V-134.5h1V-152.1h1V-182.2h1V-154.9h1V-127.3h1V-129.6h1V-136.5h1V-130.2h1V-116.4h1V-96.8h1V-78.7h1V-62.2h1V-90.5h1V-123.1h1V-104.2h1V-90.4h1V-105.1h1V-124.7h1V-114.3h1V-113.7h1V-111.1h1V-98h1V-93.7h1V-86.5h1V-95.5h1V-84.8h1V-86h1V-107.4h1V-160.7h1V-186.3h1V-162.2h1V-127.1h1V-126.1h1V-143.4h1V-177.6h1V-102.7h1V-127.8h1V-128.7h1V-152.7h1V-151.9h1V-165.3h1V-166.2h1V-188.8h1V-149.3h1V-134.4h1V-177h1V-139.9h1V-92.3h1V-152.6h1V-120.3h1V-92.6h1V-144.8h1V-158.8h1V-136.7h1V-173.8h1V-215h1V-170h1V-145.2h1V-165.2h1V-147.4h1V-112.5h1V-137.3h1V-151.6h1V-145.2h1V-160.7h1V-196.3h1V-182.1h1V-161.1h1V-139.2h1V-107.4h1V-117.2h1V-134.5h1V-128.5h1V-119h1V-107.4h1V-116.1h1V-90.5h1V-112.1h1V-112.7h1V-96.2h1V-149.1h1V-101.3h1V-110.8h1V-111.4h1V-95.6h1V-69h1V-110.9h1V-103.5h1V-130.1h1V-118.1h1V-177.9h1V-82.6h1V-110.4h1V-135.8h1V-86h1V-89.6h1V-78.3h1V-67.8h1V-85.2h1V-57.9h1V-190.3h1V-140h1V-78.5h1V-85.8h1V-113.1h1V-81.3h1V-97.3h1V-75.3h1V-56.4h1V-88.2h1V-71.6h1V-71.6h1V-162.1h1V-76h1V-53.1h1V-73.7h1V-156.4h1V-76.2h1V-101.8h1V-82.4h1V-60.8h1V-77.1h1V-93.9h1V-158h1V-99.4h1V-75.7h1V-89.6h1V-64.7h1V-107.9h1V-101h1V-117.9h1V-162h1V-70.8h1V-106.8h1V-138.7h1V-174.2h1V-98.2h1V-108h1V-98.2h1V-141.6h1V-131.1h1V-160.2h1V-209h1V-168.5h1V-187.4h1V-134.7h1V-115.4h1V-128.7h1V-112.5h1V-115.4h1V-127h1V-109.4h1V-148.7h1V-145.5h1V-66.5h1V-89.3h1V-70.4h1V-90.1h1V-112h1V-99.1h1V-127.1h1V-100.3h1V-106.5h1V-137.7h1V-108.4h1V-104h1V-111.1h1V-111.8h1V-125.6h1V-157.4h1V-73.7h1V-90h1V-103.4h1V-94.5h1V-124.6h1V-94.7h1V-91.6h1V-138.6h1V-83.6h1V-85.9h1V-126.3h1V-89.2h1V-87.5h1V-85.3h1V-113.5h1V-81.8h1V-58.3h1V-156.1h1V-113.2h1V-79.1h1V-72.2h1V-81.5h1V-78.8h1V-82.9h1V-142.6h1V-88h1V-59.1h1V-79.8h1V-125.7h1V-138.9h1V-92h1V-66.4h1V-85.4h1V-115.2h1V-102.3h1V-87.4h1V-100.6h1V-91.8h1V-109.2h1V-101.2h1V-160.1h1V-130.7h1V-158.8h1V-101.6h1V-97.9h1V-128.3h1V-175.2h1V-133.9h1V-114.2h1V-109.7h1V-85.5h1V-67.2h1V-87h1V-92.5h1V-78.9h1V-101h1V-85.4h1V-144.4h1V-170.3h1V-226h1V-174.4h1V-144.7h1V-100.8h1V-97.4h1V-104h1V-120h1V-151.8h1V-116.3h1V-86.3h1V-81.1h1V-89.5h1V-77.1h1V-57.3h1V-70.4h1V-89.7h1V-73.4h1V-92.4h1V-135.1h1V-67.6h1V-89.6h1V-106.1h1V-74.6h1V-91.8h1V-115.4h1V-100.9h1V-90.8h1V-98.6h1V-144h1V-108.4h1V-108.4h1V-119.4h1V-162.4h1V-123h1V-123.7h1V-108.8h1V-108.5h1V-120.3h1V-164h1V-128.1h1V-118.6h1V-113.3h1V-115.7h1V-129h1V-154.8h1V-132.4h1V-115.2h1V-118.4h1V-150.7h1V-125.2h1V-108.2h1V-97h1V-102.1h1V-117.5h1V-130.6h1V-136.3h1V-141.3h1V-111.5h1V-121.6h1V-85.2h1V-168.1h1V-113.9h1V-133.6h1V-103.1h1V-142.7h1V-115.6h1V-74.5h1V-54.7h1V-53h1V-39.5h1V-29.7h1V-30.4h1V-55.6h1V-124.4h1V-92.8h1V-80.4h1V-84.7h1V-80.1h1V-100.1h1V-163.5h1V-101.7h1V-83.7h1V-119.9h1V-159h1V-119.2h1V-79.4h1V-116.5h1V-172.6h1V-120.7h1V-114h1V-123.5h1V-133.7h1V-105.1h1V-111.2h1V-139.6h1V-153.5h1V-129.1h1V-115.2h1V-110.7h1V-102.4h1V-113.7h1V-111.9h1V-123.9h1V-163.1h1V-107.4h1V-116.9h1V-95.9h1V-127.5h1V-182.4h1V-119.2h1V-103.5h1V-122.8h1V-164.8h1V-120.9h1V-158.8h1V-155.7h1V-172.6h1V-134.7h1V-127.2h1V-183.7h1V-128.5h1V-105h1V-87.6h1V-112.9h1V-90.3h1V-86.8h1V-88.1h1V-102.4h1V-112.8h1V-129.9h1V-103.4h1V-99.9h1V-95.6h1V-81.7h1V-86.3h1V-72.4h1V-82.4h1V-90.4h1V-88.5h1V-68.7h1V-81.6h1V-100.5h1V-121.9h1V-182.6h1V-119.1h1V-113h1V-93.5h1V-97.2h1V-103.6h1V-123.8h1V-107.4h1V-103.9h1V-122.9h1V-104.6h1V-147.4h1V-106.8h1V-98.2h1V-99.3h1V-110.6h1V-158.9h1V-172.4h1V-157.5h1V-114.2h1V-112.8h1V-122.7h1V-160.4h1V-152.9h1V-109.9h1V-136.3h1V-119.1h1V-102.8h1V-97.6h1V-100.1h1V-108.5h1V-72.5h1V-93.5h1V-77h1V-176.6h1V-108.8h1V-98.4h1V-124.6h1V-113.8h1V-118h1V-133.7h1V-157.3h1V-132.5h1V-183.4h1V-130.2h1V-93.6h1V-106.8h1V-114.2h1V-115.4h1V-179.1h1V-124.7h1V-115.5h1V-107.3h1V-101h1V-115.2h1V-123.7h1V-139.4h1V-192.6h1V-192.6h1V-168.2h1V-215h1V-169.1h1V-145.1h1V-144.5h1V-172.6h1V-144.9h1V-139.1h1V-150h1V-157.4h1V-172.1h1V-154.9h1V-170.2h1V-158.7h1V-162.4h1V-189.8h1V-162.1h1V-141h1V-113.5h1V-128.6h1V-139.7h1V-133.1h1V-117.3h1V-101.2h1V-128.9h1V-149.7h1V-109.5h1V-113.7h1V-107.7h1V-111.7h1V-100.7h1V-91.2h1V-83.3h1V-90.5h1V-95.3h1V-97.5h1V-103.5h1V-101h1V-146.2h1V-109.3h1V-97h1V-132.9h1V-120.4h1V-161.3h1V-112.3h1V-119.9h1V-131.9h1V-102.9h1V-96h1V-138.4h1V-91.5h1V-97.9h1V-77.3h1V-144.1h1V-103.5h1V-104.1h1V-113.7h1V-159.9h1V-105.8h1V-88.9h1V-98.2h1V-94.1h1V-115.7h1V-107.1h1V-89.3h1V-97.7h1V-81.8h1V-153.9h1V-136.3h1V-135.9h1V-103.1h1V-150.1h1V-123.6h1V-125.7h1V-160.9h1V-121.3h1V-119.3h1V-125h1V-146.5h1V-167.6h1V-112.5h1V-105.8h1V-103.4h1V-107.6h1V-117.6h1V-172.6h1V-129.2h1V-173.2h1V-131.9h1V-174.9h1V-168.7h1V-129.1h1V-111.6h1V-129.9h1V-147.4h1V-162.3h1V-131.5h1V-148.5h1V-114.2h1V-119.5h1V-104.9h1V-129.7h1V-156.4h1V-177.6h1V-93.5h1V-123.5h1V-138.9h1V-132.7h1V-141.5h1V-149.4h1V-134.6h1V-162.4h1V-132h1V-103.4h1V-105.2h1V-116.6h1V-140h1V-118.4h1V-169.1h1V-120.2h1V-95.2h1V-78.5h1V-54.8h1V-80.2h1V-106.9h1V-110.2h1V-143.3h1V-103.6h1V-105.8h1V-108.7h1V-111.9h1V-118.1h1V-138.9h1V-123.3h1V-84.4h1V-77.7h1V-88.7h1V-114.5h1V-124.6h1V-122.9h1V-131.9h1V-118.8h1V-139h1V-113.1h1V-121h1V-109.9h1V-107.3h1V-115h1V-113.4h1V-94.1h1V-155.9h1V-127.9h1V-157.2h1V-149.4h1V-113.1h1V-107.5h1V-93.9h1V-113.3h1V-140.8h1V-111.3h1V-122.4h1V-103.5h1V-100.6h1V-94.7h1V-106.4h1V-119.5h1V-95.7h1V-94.9h1V-108.4h1V-112h1V-92.7h1V-98.3h1V-91.8h1V-106.4h1V-79.4h1V-87.8h1V-77.6h1V-56.7h1V-68.1h1V-82.6h1V-95.5h1V-87h1V-75.3h1V-144.2h1V-142.1h1V-99.8h1V-93.1h1V-119.1h1V-111.2h1V-94.9h1V-109.1h1V-70.2h1V-84.7h1V-68.4h1V-122.6h1V-90.5h1V-81h1V-77.2h1V-91.8h1V-82.6h1V-137.2h1V-91.8h1V-106.3h1V-132h1V-72.6h1V-79.3h1V-69.4h1V-63.1h1V-74.5h1V-71.6h1V-58.8h1V-62.7h1V-76.4h1V-123.7h1V-68h1V-53.3h1V-51.8h1V-38.3h1V-46.4h1V-62.1h1V-62.2h1V-63.9h1V-52.5h1V-44.4h1V-69.7h1V-82.6h1V-62.2h1V-73.2h1V-73.7h1V-74.6h1V-82.7h1V-104.8h1V-130.3h1V-150.5h1V-158.9h1V-117.3h1V-118h1V-144h1V-139.6h1V-122.4h1V-122.6h1V-167.4h1V-124h1V-137.6h1V-132.8h1V-174.5h1V-132.2h1V-114.8h1V-114.3h1V-126.7h1V-121.7h1V-111.9h1V-117.4h1V-129.6h1V-146.6h1V-133.5h1V-167.3h1V-135.2h1V-132h1V-154.2h1V-192.7h1V-179.7h1V-144.7h1V-158.9h1V-125.5h1V-91h1V-121.4h1V-138.1h1V-157.1h1V-138.7h1V-117.8h1V-131.1h1V-114.1h1V-158.4h1V-205.3h1V-196.8h1V-169.3h1V-152h1V-138.8h1V-135.9h1V-140.9h1V-121.1h1V-160.4h1V-164h1V-191h1V-210.7h1V-229h1V-210.7h1V-186.9h1V-166h1V-130.6h1V-164.8h1V-148.6h1V-156.3h1V-173.8h1V-160.9h1V-117h1V-165.5h1V-188h1V-174.8h1V-198.4h1V-155.5h1V-120.2h1V-186.6h1V-157h1V-116.2h1V-185.2h1V-201.7h1V-195.9h1V-153.1h1V-174.6h1V-171.3h1V-141.9h1V-154.5h1V-166.7h1V-137.8h1V-193.1h1V-132.3h1V-109.1h1V-76.9h1V-63.5h1V-89.6h1V-106h1V-98.9h1V-82h1V-116.8h1V-113h1V-111.6h1V-84.4h1V-110h1V-93.8h1V-110.1h1V-110.4h1V-105.2h1V-95h1V-102.6h1V-109h1V-120.8h1V-116.8h1V-117h1V-128.2h1V-110h1V-116.2h1V-140.6h1V-174.8h1V-139.3h1V-129.3h1V-179.4h1V-154h1V-121.6h1V-102.7h1V-121.1h1V-172h1V-121.2h1V-129.3h1V-126.5h1V-115.8h1V-119.8h1V-175.8h1V-120.4h1V-104.4h1V-103.5h1V-96.6h1V-88.6h1V-78h1V-67h1V-85.8h1V-102.6h1V-113.8h1V-116.4h1V-135.1h1V-127.1h1V-177.8h1V-89.7h1V-110.9h1V-96h1V-131.8h1V-174.9h1V-129.5h1V-120.8h1V-132.5h1V-153.1h1V-189.5h1V-146.3h1V-129.5h1V-114h1V-98.9h1V-124.4h1V-136.1h1V-131.8h1V-155.3h1V-132.5h1V-128.2h1V-145.6h1V-140.5h1V-177.4h1V-229h1V-211.4h1V-162.7h1V-152.2h1V-194.3h1V-151.4h1V-126.9h1V-121.6h1V-129.5h1V-160.9h1V-131.6h1V-118.9h1V-107.2h1V-95.8h1V-121.6h1V-128.2h1V-129.8h1V-166h1V-137h1V-163.1h1V-174.6h1V-146.8h1V-178.3h1V-155.5h1V-105.3h1V-184.2h1V-139.1h1V-154.4h1V-145.3h1V-115h1V-155.1h1V-184.3h1V-113.1h1V-149.1h1V-147h1V-155.7h1V-169.7h1V-140.7h1V-109.3h1V-120h1V-86.5h1V-158.1h1V-147.1h1V-127h1V-86.6h1V-76.8h1V-135h1V-125.3h1V-139.6h1V-143.6h1V-179.7h1V-178.2h1V-114.8h1V-124.5h1V-65h1V-97.4h1V-101.6h1V-111.9h1V-123.2h1V-130.9h1V-175.6h1V-101h1V-111.9h1V-87h1V-96.8h1V-118.3h1V-126.9h1V-132.9h1V-170.6h1V-220h1V-170h1V-146.7h1V-207.4h1V-159.1h1V-134.7h1V-115.4h1V-129.9h1V-168h1V-201.6h1V-169.1h1V-141.9h1V-145.7h1V-148.2h1V-163h1V-146.6h1V-102.5h1V-145.9h1V-141.7h1V-132.3h1V-133.4h1V-123.6h1V-150.6h1V-118.2h1V-162.3h1V-165.3h1V-168.4h1V-110.7h1V-128.9h1V-150.4h1V-154.9h1V-189.1h1V-144.2h1V-134.6h1V-164.9h1V-128h1V-111.3h1V-94.9h1V-80.4h1V-91.6h1V-108.6h1V-139.7h1V-160h1V-142.5h1V-128.9h1V-99.9h1V-139.5h1V-162.7h1V-140.5h1V-107.1h1V-118.6h1V-149.5h1V-178.2h1V-166h1V-166.3h1V-188.5h1V-197h1V-176.2h1V-117h1V-147.2h1V-130.5h1V-139.7h1V-114.4h1V-132.9h1V-153.6h1V-178.1h1V-199.2h1V-183.1h1V-200.6h1V-218h1V-200.6h1V-183.1h1V-188.4h1V-171.4h1V-167.7h1V-191.9h1V-150.4h1V-183.6h1V-164h1V-129.5h1V-98.9h1V-115.2h1V-120.4h1V-119.9h1V-106.8h1V-120h1V-150.4h1V-121h1V-105.9h1V-122.5h1V-145.8h1V-127.5h1V-167.6h1V-140.3h1V-136.6h1V-140.1h1V-127.9h1V-126h1V-134.4h1V-148h1V-179.3h1V-175.9h1V-145.8h1V-132.6h1V-119h1V-123.4h1V-156.1h1V-100.8h1V-116.5h1V-122.5h1V-118.4h1V-106.3h1V-113.3h1V-115.2h1V-170.5h1V-89h1V-90.5h1V-84.6h1V-88.2h1V-104.8h1V-110.2h1V-173.9h1V-117.5h1V-134.6h1V-152.1h1V-121.1h1V-83h1V-92.5h1V-78.4h1V-107.4h1V-178.3h1V-100h1V-107h1V-152.7h1V-74.7h1V-111h1V-142.4h1V-112.7h1V-103.6h1V-125.5h1V-155.5h1V-127.5h1V-138.5h1V-190.8h1V-138.3h1V-169h1V-137.2h1V-179.3h1V-220h1V-177h1V-140.3h1V-159h1V-206.5h1V-166h1V-132.8h1V-96.7h1V-118.1h1V-115.1h1V-142.3h1V-127.4h1V-148.2h1V-151.1h1V-100.6h1V-121.6h1V-134h1V-140.1h1V-164.5h1V-150.9h1V-129.8h1V-110.1h1V-194.7h1V-188.7h1V-172.7h1V-95h1V-121.1h1V-194.1h1V-116.9h1V-119.1h1V-187.2h1V-128.7h1V-117.6h1V-127.4h1V-129.8h1V-132.8h1V-115.1h1V-138.1h1V-156.4h1V-129.1h1V-139.4h1V-121.6h1V-128.7h1V-137h1V-158.3h1V-139.2h1V-141h1V-140.2h1V-132.3h1V-137.4h1V-118.2h1V-157.5h1V-148.4h1V-169.1h1V-144.8h1V-127.2h1V-129h1V-140.3h1V-163.9h1V-167.1h1V-145.5h1V-101.9h1V-133.9h1V-139.1h1V-143.6h1V-161.2h1V-192h1V-232h1V-183.4h1V-191h1V-158h1V-173.2h1V-193.7h1V-191.4h1V-157.2h1V-134.5h1V-140.4h1V-197.3h1V-152.7h1V-183.8h1V-143.3h1V-188h1V-144.4h1V-121.2h1V-111.1h1V-111.3h1V-110.9h1V-108.3h1V-120.7h1V-118.9h1V-148h1V-112.8h1V-117.6h1V-139.2h1V-127h1V-125.7h1V-89.3h1V-100.2h1V-88.8h1V-110.8h1V-156.5h1V-104.1h1V-143.9h1V-120.5h1V-107.6h1V-117.7h1V-103h1V-104.8h1V-113.3h1V-117.9h1V-93.7h1V-105.5h1V-96.5h1V-116h1V-112.8h1V-110.9h1V-87.9h1V-106.6h1V-94.6h1V-105.3h1V-70.3h1V-86.8h1V-139.3h1V-109.5h1V-146h1V-113.7h1V-138.4h1V-170.4h1V-220h1V-172.7h1V-150.6h1V-115.7h1V-128.1h1V-127.8h1V-147.6h1V-140.4h1V-129.7h1V-129.6h1V-153.5h1V-182.5h1V-220h1V-166.5h1V-136.7h1V-115.5h1V-109.9h1V-104.9h1V-110.4h1V-130.8h1V-135.4h1V-118.9h1V-127.3h1V-103.4h1V-130h1V-100h1V-64.8h1V-99.6h1V-127.1h1V-129.4h1V-112.9h1V-112h1V-117.1h1V-128.2h1V-161.8h1V-118.7h1V-111.1h1V-115.7h1V-106.9h1V-120.7h1V-88.1h1V-131.4h1V-148.8h1V-133.4h1V-102.4h1V-155.9h1V-182.6h1V-220h1V-190.7h1V-154.5h1V-137h1V-140.2h1V-159.7h1V-193.3h1V-171.4h1V-160.5h1V-173.7h1V-186.4h1V-150.8h1V-185.7h1V-156.1h1V-163.5h1V-151.4h1V-144.8h1V-173h1V-132.5h1V-101.8h1V-100.9h1V-107.5h1V-95.1h1V-138.9h1V-187.2h1V-164.6h1V-164.5h1V-185.8h1V-191.7h1V-206.1h1V-224h1V-206.1h1V-188.2h1V-186.9h1V-183.9h1V-187.5h1V-143h1V-147h1V-175.4h1V-144.7h1V-132.4h1V-117.2h1V-133.8h1V-123.9h1V-114.2h1V-119h1V-153h1V-129.1h1V-110.8h1V-86.4h1V-111.9h1V-139.6h1V-98h1V-109.9h1V-105.9h1V-95.3h1V-161.9h1V-181.1h1V-224h1V-184.8h1V-158.1h1V-152.7h1V-147.6h1V-172h1V-144.1h1V-126.9h1V-140.5h1V-135.3h1V-111.2h1V-146.9h1V-189.6h1V-189.4h1V-128.9h1V-142.2h1V-159.7h1V-169.7h1V-166.9h1V-183.2h1V-153.3h1V-136h1V-164.7h1V-138.6h1V-171.3h1V-192.2h1V-172.8h1V-147.6h1V-151.6h1V-144.3h1V-145.5h1V-154.4h1V-152.4h1V-148.1h1V-160.1h1V-163.5h1V-131.8h1V-90.2h1V-104.1h1V-122h1V-106h1V-110.7h1V-126.8h1V-149.7h1V-179.4h1V-160.5h1V-146.4h1V-141.8h1V-160.4h1V-152.9h1V-141.4h1V-130.6h1V-143.4h1V-149.5h1V-176.1h1V-162.4h1V-126.7h1V-95.3h1V-109.1h1V-97h1V-107.1h1V-114.6h1V-130.4h1V-116.9h1V-120h1V-123.6h1V-118.1h1V-141.2h1V-145.3h1V-142h1V-133.8h1V-149.8h1V-172h1V-153.9h1V-172.1h1V-218h1V-179.5h1V-150.3h1V-117.2h1V-125.5h1V-120.3h1V-98.7h1V-68.3h1V-103.5h1V-122.3h1V-159.5h1V-131.7h1V-153.7h1V-126.3h1V-131.1h1V-131.6h1V-130.9h1V-104.2h1V-85.3h1V-128.8h1V-105.8h1V-150.1h1V-109.1h1V-124.8h1V-108.8h1V-130.8h1V-140.9h1V-161.2h1V-160h1V-149.3h1V-181.1h1V-148.9h1V-166.4h1V-149.2h1V-143.3h1V-125h1V-126.5h1V-115.3h1V-126h1V-139.8h1V-156.1h1V-123.9h1V-144.5h1V-147.6h1V-134h1V-118.5h1V-121.1h1V-120.7h1V-113.9h1V-114.4h1V-125.7h1V-158.6h1V-121.2h1V-135.1h1V-125.6h1V-131.4h1V-111h1V-128.4h1V-118.2h1V-147.2h1V-111.8h1V-152.3h1V-105.2h1V-74.5h1V-59.8h1V-73.1h1V-77.2h1V-76.2h1V-76.9h1V-109.5h1V-65.6h1V-61.2h1V-109h1V-124.4h1V-117.5h1V-90.4h1V-76.9h1V-100.6h1V-125h1V-102.8h1V-121.5h1V-97.5h1V-97.4h1V-99.5h1V-81.9h1V-126.7h1V-120.2h1V-113.8h1V-80.6h1V-90.3h1V-71.4h1V-103.9h1V-114.2h1V-142.1h1V-103.6h1V-85.8h1V-122.4h1V-105.1h1V-91.4h1V-98.7h1V-93.2h1V-106.7h1V-77.8h1V-54.5h1V-85.5h1V-115h1V-97.8h1V-75.5h1V-109.5h1V-126.1h1V-131.5h1V-99.3h1V-99h1V-92.5h1V-103.8h1V-68.3h1V-81.3h1V-137.1h1V-60.1h1V-61.5h1V-67h1V-46.2h1V-38.5h1V-45h1V-27.7h1V-29.9h1V-26.9h1V-51h1V-62.6h1V-81.2h1V-122h1V-97.6h1V-102h1V-78.3h1V-82.3h1V-91.7h1V-81.2h1V-113.3h1V-93.5h1V-73.3h1V-88.7h1V-94h1V-105.1h1V-124h1V-103.3h1V-77.2h1V-143.9h1V-108.6h1V-81.9h1V-112.5h1V-93.1h1V-109.5h1V-134.2h1V-182.3h1V-143.5h1V-95.8h1V-134.7h1V-160.2h1V-138.7h1V-136.5h1V-145.2h1V-181.4h1V-241h1V-187.2h1V-146.6h1V-131.7h1V-154.9h1V-174h1V-155h1V-142.1h1V-122.7h1V-116.6h1V-117.6h1V-121.1h1V-109.8h1V-119.7h1V-142.3h1V-172.9h1V-180.1h1V-155.5h1V-198.9h1V-154.8h1V-140.9h1V-144h1V-136.7h1V-129.4h1V-152.3h1V-199.5h1V-261h1V-201.7h1V-158.5h1V-155h1V-139.8h1V-144.1h1V-131.8h1V-118.5h1V-126h1V-141.2h1V-129.4h1V-183.9h1V-127.9h1V-106.6h1V-102.1h1V-119.8h1V-185.6h1V-186.6h1V-184.3h1V-132.6h1V-102h1V-85.7h1V-112.9h1V-118.4h1V-154.5h1V-115.8h1V-94h1V-129.6h1V-160.9h1V-178.8h1V-127.3h1V-129h1V-111.5h1V-88.5h1V-120.3h1V-148.8h1V-133.1h1V-113.9h1V-136h1V-165.9h1V-211.7h1V-157.9h1V-155h1V-197.2h1V-230h1V-250h1V-230h1V-192h1V-161.1h1V-146.4h1V-103.3h1V-172.9h1V-140.1h1V-157.2h1V-139.9h1V-137.8h1V-96.7h1V-147.1h1V-186h1V-147.2h1V-162h1V-128.3h1V-152h1V-151h1V-141.1h1V-117.1h1V-119.9h1V-128.2h1V-142.2h1V-164.2h1V-183.2h1V-93.5h1V-118.7h1V-84.9h1V-52.1h1V-78.7h1V-123.5h1V-161h1V-117.1h1V-131.1h1V-92.3h1V-108.8h1V-113.1h1V-123.1h1V-119.5h1V-107.8h1V-134.1h1V-174.7h1V-134.1h1V-155.5h1V-141.4h1V-166.5h1V-136.7h1V-110.9h1V-154.3h1V-176.4h1V-209.5h1V-163.7h1V-140.6h1V-157.4h1V-180.3h1V-153h1V-142.1h1V-129h1V-153.5h1V-122.5h1V-110.7h1V-92.2h1V-70.9h1V-95.4h1V-125.5h1V-179.7h1V-131.3h1V-145.2h1V-144.1h1V-194h1V-138.1h1V-119.6h1V-164.3h1V-111h1V-90.5h1V-86.2h1V-140.8h1V-70.8h1V-67.4h1V-56.8h1V-77.6h1V-87.2h1V-86.7h1V-78.3h1V-71.5h1V-86.6h1V-99.6h1V-116.7h1V-145.1h1V-174.5h1V-178.9h1V-131.9h1V-95h1V-69.6h1V-89.5h1V-148.3h1V-203.9h1V-149.1h1V-131.2h1V-170.4h1V-170.1h1V-199.4h1V-258h1V-197.3h1V-162.2h1V-182.2h1V-138.6h1V-134.3h1V-121.5h1V-137.7h1V-123.5h1V-152.2h1V-130.7h1V-162.8h1V-145.9h1V-115.2h1V-81.4h1V-69h1V-83.2h1V-102.4h1V-110.3h1V-85.2h1V-96.9h1V-85.6h1V-97.7h1V-105.8h1V-142.3h1V-67.2h1V-99.5h1V-78.2h1V-101.5h1V-127.1h1V-131.3h1V-105h1V-78.3h1V-105.5h1V-138h1V-152.9h1V-106.2h1V-114.4h1V-170.5h1V-137.7h1V-102h1V-95.9h1V-91.7h1V-96.3h1V-85.5h1V-85.9h1V-46.4h1V-77.3h1V-117.6h1V-124h1V-87.4h1V-106.8h1V-87.4h1V-92.9h1V-105.5h1V-87.7h1V-83.5h1V-82.2h1V-102.6h1V-138.4h1V-107.6h1V-83.9h1V-89.3h1V-106.5h1V-138.7h1V-183h1V-110.5h1V-108.2h1V-148.1h1V-189.4h1V-133.7h1V-108.6h1V-83.9h1V-98.3h1V-61.6h1V-82.3h1V-110.6h1V-123.7h1V-116.1h1V-121.9h1V-139.7h1V-193.1h1V-134.4h1V-114.7h1V-131.9h1V-125.3h1V-121.8h1V-108.2h1V-97.1h1V-144.4h1V-120.7h1V-172.3h1V-109.9h1V-154.9h1V-133.2h1V-80.9h1V-97h1V-76.6h1V-87.6h1V-106.7h1V-120.7h1V-127.3h1V-136.7h1V-156.8h1V-154.6h1V-172.7h1V-157.4h1V-168.6h1V-157.8h1V-145h1V-135.2h1V-150.6h1V-173.7h1V-199.5h1V-168.5h1V-166.2h1V-194.3h1V-202.5h1V-227.2h1V-247h1V-227.2h1V-205.4h1V-201.7h1V-161.3h1V-109.5h1V-81.1h1V-98.7h1V-103.8h1V-107h1V-157.9h1V-124.4h1V-89.1h1V-61.7h1V-48.1h1V-71.1h1V-98.5h1V-97.4h1V-102.3h1V-171h1V-116h1V-90.6h1V-93.8h1V-119.6h1V-177.4h1V-135.8h1V-84.4h1V-109.9h1V-149.1h1V-166.4h1V-156.9h1V-137.6h1V-155.8h1V-172.4h1V-170.5h1V-153.5h1V-145h1V-145.4h1V-171.1h1V-142.7h1V-131.9h1V-164.4h1V-90.2h1V-116.6h1V-142.3h1V-121.4h1V-128.1h1V-93.3h1V-76.4h1V-83.6h1V-62.1h1V-58.8h1V-57.6h1V-47.8h1V-45.4h1V-59.6h1V-92.1h1V-72.4h1V-72.2h1V-94.4h1V-66.2h1V-88.4h1V-135.1h1V-88h1V-79.5h1V-81.7h1V-80.8h1V-75.3h1V-85.8h1V-117.8h1V-133.9h1V-103.7h1V-55.8h1V-75.5h1V-71h1V-94.1h1V-122.1h1V-86.3h1V-104.1h1V-88.9h1V-85.7h1V-68.1h1V-83.8h1V-68.7h1V-97.9h1V-112.2h1V-99.2h1V-106.8h1V-145.4h1V-107.2h1V-94.9h1V-79.8h1V-86.1h1V-82.8h1V-80.9h1V-52.6h1V-39.1h1V-46.7h1V-64.7h1V-99h1V-119.7h1V-135.6h1V-123.3h1V-151.3h1V-190h1V-250h1V-184.6h1V-141.9h1V-170.2h1V-142.6h1V-184.7h1V-252h1V-184.3h1V-175.7h1V-132.4h1V-157.2h1V-128.5h1V-122.2h1V-112.2h1V-80h1V-51.6h1V-72.3h1V-95.6h1V-99.2h1V-109.8h1V-87.1h1V-117.9h1V-118.8h1V-163.4h1V-162.9h1V-163.2h1V-168.1h1V-210.9h1V-236.8h1V-259.4h1V-282h1V-259.4h1V-241.2h1V-208.9h1V-200.8h1V-225.3h1V-251.2h1V-273h1V-251.2h1V-230.8h1V-194.5h1V-175.4h1V-183h1V-166.9h1V-156h1V-159.9h1V-169.1h1V-116.3h1V-134.7h1V-113.6h1V-92.5h1V-102.6h1V-103.3h1V-84.2h1V-97.7h1V-101.8h1V-98.8h1V-111.5h1V-121.9h1V-107.3h1V-91h1V-69.5h1V-75.3h1V-88.6h1V-109.6h1V-83.6h1V-143.3h1V1z"/><filter id="wb" x="-1%" y="-1%" width="102%" height="102%"><feGaussianBlur stdDeviation="0.65 0.25"/></filter></defs><rect x="0" y="376.9" width="2446" height="379.1" fill="#a0ccb2"/><rect x="0" y="1134.4" width="2446" height="378.5999999999999" fill="#a0ccb2"/><rect x="0" y="185.5" width="2446" height="2" fill="#9dc3ae"/><rect x="0" y="565.6" width="2446" height="2" fill="#c4e3d1"/><rect x="0" y="943.9" width="2446" height="2" fill="#9dc3ae"/><rect x="0" y="1324.0" width="2446" height="2" fill="#c4e3d1"/><rect x="549.2" y="0" width="2" height="376.9" fill="#9dc3ae"/><rect x="549.2" y="376.9" width="2" height="379.1" fill="#c4e3d1"/><rect x="549.2" y="756" width="2" height="378.4000000000001" fill="#9dc3ae"/><rect x="549.2" y="1134.4" width="2" height="378.5999999999999" fill="#c4e3d1"/><rect x="1099.9" y="0" width="2" height="376.9" fill="#9dc3ae"/><rect x="1099.9" y="376.9" width="2" height="379.1" fill="#c4e3d1"/><rect x="1099.9" y="756" width="2" height="378.4000000000001" fill="#9dc3ae"/><rect x="1099.9" y="1134.4" width="2" height="378.5999999999999" fill="#c4e3d1"/><rect x="1650.6" y="0" width="2" height="376.9" fill="#9dc3ae"/><rect x="1650.6" y="376.9" width="2" height="379.1" fill="#c4e3d1"/><rect x="1650.6" y="756" width="2" height="378.4000000000001" fill="#9dc3ae"/><rect x="1650.6" y="1134.4" width="2" height="378.5999999999999" fill="#c4e3d1"/><rect x="2201.3" y="0" width="2" height="376.9" fill="#9dc3ae"/><rect x="2201.3" y="376.9" width="2" height="379.1" fill="#c4e3d1"/><rect x="2201.3" y="756" width="2" height="378.4000000000001" fill="#9dc3ae"/><rect x="2201.3" y="1134.4" width="2" height="378.5999999999999" fill="#c4e3d1"/><g filter="url(#wb)"><use href="#wv" transform="translate(0,376.9)" fill="#4f5162"/></g><g filter="url(#wb)"><use href="#wv" transform="translate(0,377.9) scale(1,-1)" fill="#444a59"/></g><g filter="url(#wb)"><use href="#wv" transform="translate(0,1134.4)" fill="#4f5162"/></g><g filter="url(#wb)"><use href="#wv" transform="translate(0,1135.4) scale(1,-1)" fill="#444a59"/></g><rect x="549.2" y="0.0" width="2" height="376.9" fill="#000" opacity="0.09"/><rect x="549.2" y="376.9" width="2" height="379.1" fill="#fff" opacity="0.075"/><rect x="549.2" y="756.0" width="2" height="378.4" fill="#000" opacity="0.09"/><rect x="549.2" y="1134.4" width="2" height="378.6" fill="#fff" opacity="0.075"/><rect x="1099.9" y="0.0" width="2" height="376.9" fill="#000" opacity="0.09"/><rect x="1099.9" y="376.9" width="2" height="379.1" fill="#fff" opacity="0.075"/><rect x="1099.9" y="756.0" width="2" height="378.4" fill="#000" opacity="0.09"/><rect x="1099.9" y="1134.4" width="2" height="378.6" fill="#fff" opacity="0.075"/><rect x="1650.6" y="0.0" width="2" height="376.9" fill="#000" opacity="0.09"/><rect x="1650.6" y="376.9" width="2" height="379.1" fill="#fff" opacity="0.075"/><rect x="1650.6" y="756.0" width="2" height="378.4" fill="#000" opacity="0.09"/><rect x="1650.6" y="1134.4" width="2" height="378.6" fill="#fff" opacity="0.075"/><rect x="2201.3" y="0.0" width="2" height="376.9" fill="#000" opacity="0.09"/><rect x="2201.3" y="376.9" width="2" height="379.1" fill="#fff" opacity="0.075"/><rect x="2201.3" y="756.0" width="2" height="378.4" fill="#000" opacity="0.09"/><rect x="2201.3" y="1134.4" width="2" height="378.6" fill="#fff" opacity="0.075"/><rect x="0" y="754.2" width="2446" height="3.6" fill="#5b8d65"/><rect x="0" y="754.2" width="2446" height="1" fill="#4b7d57"/></svg></div>
<div class="hd" style="left:87.5px;top:1205px"></div>
<div class="hd" style="left:2536px;top:1205px"></div>
<div id="rul"></div>
<div class="tk" style="left:208.6px"></div>
<div class="tk" style="left:318.8px"></div>
<div class="tk" style="left:428.9px"></div>
<div class="tk" style="left:539.1px"></div>
<div class="tk M" style="left:648.7px"></div>
<div class="tk" style="left:759.3px"></div>
<div class="tk" style="left:869.5px"></div>
<div class="tk" style="left:979.6px"></div>
<div class="tk" style="left:1089.8px"></div>
<div class="tk M" style="left:1199.4px"></div>
<div class="tk" style="left:1310.0px"></div>
<div class="tk" style="left:1420.2px"></div>
<div class="tk" style="left:1530.3px"></div>
<div class="tk" style="left:1640.5px"></div>
<div class="tk M" style="left:1750.1px"></div>
<div class="tk" style="left:1860.7px"></div>
<div class="tk" style="left:1970.9px"></div>
<div class="tk" style="left:2081.0px"></div>
<div class="tk" style="left:2191.2px"></div>
<div class="tk M" style="left:2300.8px"></div>
<div class="tk" style="left:2411.4px"></div>
<div class="tk" style="left:2521.6px"></div>
<div class="rl" style="left:105.0px">00'00''000</div>
<div class="rl" style="left:655.7px">01'00''000</div>
<div class="rl" style="left:1206.4px">02'00''000</div>
<div class="rl" style="left:1757.1px">03'00''000</div>
<div class="rl" style="left:2307.8px">04'00''000</div>
<svg class="tx" style="left:89px;top:1974px" width="20" height="30" viewBox="0 0 20 30"><path d="M10 1L18.500 9.500V26.500Q18.500 28 17 28H3Q1.500 28 1.500 26.500V9.500z" fill="#d8463f" stroke="#b3201f" stroke-width="1.6"/><path d="M10 4L16 10V25H11z" fill="#c22d2a" opacity=".6"/></svg>
<div id="wstrip"></div>
<div id="st"></div>
<div class="stt" style="left:85px">32 bit / 44.1 kHz</div>
<div class="cb" style="left:259px;top:2060px;width:24px;height:24px;border-radius:5px"></div>
<svg class="tx" role="img" aria-label="循环播放" style="left:294.0px;top:2062.3px" width="82.0" height="25.0" fill="#222"><text x="0" y="17.6" font-size="20">循环播放</text></svg>
<svg class="tx" role="img" aria-label="水平缩放" style="left:2006.0px;top:2062.3px" width="82.0" height="25.0" fill="#222"><text x="0" y="17.6" font-size="20">水平缩放</text></svg>
<svg class="tx" style="left:2091px;top:2059px" width="16" height="28" viewBox="0 0 16 28"><path d="M3 10.5L8 5l5 5.5M3 17.5L8 23l5-5.5" fill="none" stroke="#333" stroke-width="2" stroke-linecap="round" stroke-linejoin="round"/></svg>
<div class="sl" style="left:2130px;top:2069.5px;width:414px;background:#aaa"></div><div class="sl" style="left:2130px;top:2069.5px;width:310px;background:#777"></div><div class="kn" style="left:2429px;top:2061px;width:24px;height:24px"></div>
</div></div>
<div id="dlg"><div id="din">
<div id="dtb"></div>
<div class="tl" style="left:856px;top:595.5px;background:#fc5b57;border-color:#df4744"></div>
<div class="tl" style="left:896px;top:595.5px;background:#fdbc40;border-color:#de9f34"></div>
<div class="tl" style="left:936px;top:595.5px;background:#34c84a;border-color:#27aa35"></div>
<svg class="tx" role="img" aria-label="常规设置" style="left:1223.0px;top:594.7px" width="106.0" height="32.5" fill="#3a3a3a"><text x="0" y="22.88" font-size="26">常规设置</text></svg>
<div id="dsel"></div>
<svg class="tx" role="img" aria-label="常规设置" style="left:856.7px;top:707.3px" width="90.0" height="27.5" fill="#2e2e2e"><text x="0" y="19.36" font-size="22">常规设置</text></svg>
<svg class="tx" role="img" aria-label="声音" style="left:971.7px;top:707.3px" width="46.0" height="27.5" fill="#2e2e2e"><text x="0" y="19.36" font-size="22">声音</text></svg>
<svg class="tx" role="img" aria-label="颜色" style="left:1051.6px;top:707.3px" width="46.0" height="27.5" fill="#2e2e2e"><text x="0" y="19.36" font-size="22">颜色</text></svg>
<svg class="tx" role="img" aria-label="流" style="left:1142.8px;top:707.3px" width="24.0" height="27.5" fill="#2e2e2e"><text x="0" y="19.36" font-size="22">流</text></svg>
<svg class="tx" role="img" aria-label="临时文件" style="left:1202.4px;top:707.3px" width="90.0" height="27.5" fill="#2e2e2e"><text x="0" y="19.36" font-size="22">临时文件</text></svg>
<svg class="tx" role="img" aria-label="单位" style="left:1318.0px;top:707.3px" width="46.0" height="27.5" fill="#2e2e2e"><text x="0" y="19.36" font-size="22">单位</text></svg>
<svg class="tx" role="img" aria-label="更新" style="left:1398.0px;top:707.3px" width="46.0" height="27.5" fill="#2e2e2e"><text x="0" y="19.36" font-size="22">更新</text></svg>
<svg class="tx" role="img" aria-label="高级" style="left:1478.0px;top:707.3px" width="46.0" height="27.5" fill="#2e2e2e"><text x="0" y="19.36" font-size="22">高级</text></svg>
<svg class="tx" style="left:840px;top:628px" width="870" height="78" viewBox="840 628 870 78"><defs>
<linearGradient id="pl2" x1="0" y1="0" x2="0" y2="1"><stop offset="0" stop-color="#fefefe"/><stop offset=".75" stop-color="#dcdcdc"/><stop offset=".93" stop-color="#d2d2d2"/><stop offset="1" stop-color="#f2f2f2"/></linearGradient>
<linearGradient id="sil" x1="0" y1="0" x2="0" y2="1"><stop offset="0" stop-color="#7e7e7e"/><stop offset="1" stop-color="#4a4a4a"/></linearGradient>
<linearGradient id="spk" x1="0" y1="0" x2="1" y2="0"><stop offset="0" stop-color="#1d1d1d"/><stop offset=".55" stop-color="#4a4a4a"/><stop offset="1" stop-color="#2a2a2a"/></linearGradient>
<linearGradient id="spr" x1="0" y1="0" x2="1" y2="1"><stop offset="0" stop-color="#5a5a5a"/><stop offset=".5" stop-color="#d6d6d6"/><stop offset="1" stop-color="#6a6a6a"/></linearGradient>
<linearGradient id="mag" x1="0" y1="0" x2="0" y2="1"><stop offset="0" stop-color="#6d6d76"/><stop offset=".5" stop-color="#c4c4cc"/><stop offset="1" stop-color="#77777f"/></linearGradient>
<linearGradient id="gear" x1="0" y1="0" x2="0" y2="1"><stop offset="0" stop-color="#f1f4fa"/><stop offset=".45" stop-color="#bfc8d9"/><stop offset="1" stop-color="#666d7d"/></linearGradient>
<linearGradient id="gear2" x1="0" y1="0" x2="0" y2="1"><stop offset="0" stop-color="#aab4c8"/><stop offset="1" stop-color="#d5dbe8"/></linearGradient>
<linearGradient id="arr" gradientUnits="userSpaceOnUse" x1="0" y1="700" x2="0" y2="636"><stop offset="0" stop-color="#b9c4e2" stop-opacity=".25"/><stop offset=".35" stop-color="#6f83c0"/><stop offset="1" stop-color="#27388c"/></linearGradient>
<linearGradient id="arr2" gradientUnits="userSpaceOnUse" x1="0" y1="636" x2="0" y2="700"><stop offset="0" stop-color="#c3cce6" stop-opacity=".25"/><stop offset=".35" stop-color="#8497cc"/><stop offset="1" stop-color="#2a3a90"/></linearGradient>
<radialGradient id="glb" cx=".42" cy=".4" r=".65"><stop offset="0" stop-color="#8cc4ff"/><stop offset=".55" stop-color="#2a6fe0"/><stop offset="1" stop-color="#0c2c8c"/></radialGradient>
<radialGradient id="clk" cx=".5" cy=".4" r=".6"><stop offset="0" stop-color="#fff"/><stop offset="1" stop-color="#e6e6e6"/></radialGradient>
<linearGradient id="clr" x1="0" y1="0" x2="0" y2="1"><stop offset="0" stop-color="#7d7d7d"/><stop offset=".5" stop-color="#cfcfcf"/><stop offset="1" stop-color="#858585"/></linearGradient>
<linearGradient id="docg" x1="0" y1="0" x2="1" y2="1"><stop offset="0" stop-color="#fdfdfd"/><stop offset="1" stop-color="#ececec"/></linearGradient>
<radialGradient id="whl" cx=".5" cy=".5" r=".5"><stop offset="0" stop-color="#fff" stop-opacity="1"/><stop offset=".5" stop-color="#fff" stop-opacity=".55"/><stop offset="1" stop-color="#fff" stop-opacity=".18"/></radialGradient>
<radialGradient id="whs" cx=".5" cy=".5" r=".5"><stop offset=".86" stop-color="#000" stop-opacity="0"/><stop offset="1" stop-color="#000" stop-opacity=".22"/></radialGradient>
<linearGradient id="ora" x1="0" y1="0" x2="1" y2="1"><stop offset="0" stop-color="#e3ab55"/><stop offset="1" stop-color="#cf9238"/></linearGradient>
<filter id="bl1" x="-30%" y="-30%" width="160%" height="160%"><feGaussianBlur stdDeviation="1.6"/></filter>
</defs><rect x="876" y="690" width="50" height="5" rx="2.500" fill="#000" opacity=".22" filter="url(#bl1)"/><rect x="874.500" y="645.500" width="53" height="45" rx="2.800" fill="url(#pl2)" stroke="#6f6f6f" stroke-width="1.100"/><rect x="878.2" y="649.2" width="3.400" height="3.400" rx=".6" fill="#fff" stroke="#8d8d8d" stroke-width=".8"/><rect x="920.2" y="649.2" width="3.400" height="3.400" rx=".6" fill="#fff" stroke="#8d8d8d" stroke-width=".8"/><rect x="878.2" y="681.3" width="3.400" height="3.400" rx=".6" fill="#fff" stroke="#8d8d8d" stroke-width=".8"/><rect x="920.2" y="681.3" width="3.400" height="3.400" rx=".6" fill="#fff" stroke="#8d8d8d" stroke-width=".8"/><path d="M901.700 651C897 651 894.500 652.500 894 655L893.500 658.500L890.400 663L892 664.500L891.500 667L892.500 669.500L896 671.500C893 675 889.500 680 887.100 684L898 684.800C903 683.500 907 682.800 911.200 682.600L912.500 683.500L913.200 678.600L911.500 671.500L909.800 670.500C911 666 911.500 661 910.500 657C909 652.500 905.500 651 901.700 651Z" fill="url(#sil)" stroke="#3f3f3f" stroke-width=".7"/><g transform="translate(1003.300,666.400) rotate(55)"><g transform="translate(1.500,19)"><ellipse cx="0" cy="0" rx="12.500" ry="9" fill="url(#mag)" stroke="#4e4e55" stroke-width="1"/><ellipse cx="0" cy="4" rx="9" ry="5" fill="#8a8a92"/></g><ellipse cx="0" cy="0" rx="31.500" ry="13.200" fill="url(#spk)" stroke="url(#spr)" stroke-width="2.800"/><ellipse cx="0" cy="2.500" rx="23" ry="8.500" fill="#1c1c1c" opacity=".55"/><ellipse cx="-1" cy="4.500" rx="6" ry="4.200" fill="#8c8c8c"/><ellipse cx="-2" cy="3.800" rx="3.200" ry="2.400" fill="#f0f0f0"/></g><ellipse cx="1073.9" cy="694.1" rx="19" ry="3.500" fill="#000" opacity=".25" filter="url(#bl1)"/><path d="M1073.9 668.1L1099.49 668.61A25.6 25.6 0 0 0 1099.21 664.25z" fill="rgb(255,45,58)"/><path d="M1073.9 668.1L1099.34 665.27A25.6 25.6 0 0 0 1098.49 660.98z" fill="rgb(255,64,50)"/><path d="M1073.9 668.1L1098.76 661.97A25.6 25.6 0 0 0 1097.35 657.83z" fill="rgb(255,83,42)"/><path d="M1073.9 668.1L1097.74 658.78A25.6 25.6 0 0 0 1095.81 654.86z" fill="rgb(255,102,34)"/><path d="M1073.9 668.1L1096.32 655.75A25.6 25.6 0 0 0 1093.89 652.11z" fill="rgb(255,121,26)"/><path d="M1073.9 668.1L1094.52 652.92A25.6 25.6 0 0 0 1091.64 649.64z" fill="rgb(255,140,18)"/><path d="M1073.9 668.1L1092.36 650.36A25.6 25.6 0 0 0 1089.08 647.48z" fill="rgb(255,159,10)"/><path d="M1073.9 668.1L1089.89 648.11A25.6 25.6 0 0 0 1086.25 645.68z" fill="rgb(255,172,15)"/><path d="M1073.9 668.1L1087.14 646.19A25.6 25.6 0 0 0 1083.22 644.26z" fill="rgb(255,186,20)"/><path d="M1073.9 668.1L1084.17 644.65A25.6 25.6 0 0 0 1080.03 643.24z" fill="rgb(255,199,26)"/><path d="M1073.9 668.1L1081.02 643.51A25.6 25.6 0 0 0 1076.73 642.66z" fill="rgb(255,213,31)"/><path d="M1073.9 668.1L1077.75 642.79A25.6 25.6 0 0 0 1073.39 642.51z" fill="rgb(255,226,36)"/><path d="M1073.9 668.1L1074.41 642.51A25.6 25.6 0 0 0 1070.05 642.79z" fill="rgb(255,240,42)"/><path d="M1073.9 668.1L1071.07 642.66A25.6 25.6 0 0 0 1066.78 643.51z" fill="rgb(225,237,47)"/><path d="M1073.9 668.1L1067.77 643.24A25.6 25.6 0 0 0 1063.63 644.65z" fill="rgb(196,234,52)"/><path d="M1073.9 668.1L1064.58 644.26A25.6 25.6 0 0 0 1060.66 646.19z" fill="rgb(167,232,58)"/><path d="M1073.9 668.1L1061.55 645.68A25.6 25.6 0 0 0 1057.91 648.11z" fill="rgb(137,229,63)"/><path d="M1073.9 668.1L1058.72 647.48A25.6 25.6 0 0 0 1055.44 650.36z" fill="rgb(108,226,68)"/><path d="M1073.9 668.1L1056.16 649.64A25.6 25.6 0 0 0 1053.28 652.92z" fill="rgb(79,224,74)"/><path d="M1073.9 668.1L1053.91 652.11A25.6 25.6 0 0 0 1051.48 655.75z" fill="rgb(73,224,96)"/><path d="M1073.9 668.1L1051.99 654.86A25.6 25.6 0 0 0 1050.06 658.78z" fill="rgb(68,224,118)"/><path d="M1073.9 668.1L1050.45 657.83A25.6 25.6 0 0 0 1049.04 661.97z" fill="rgb(63,224,141)"/><path d="M1073.9 668.1L1049.31 660.98A25.6 25.6 0 0 0 1048.46 665.27z" fill="rgb(57,224,163)"/><path d="M1073.9 668.1L1048.59 664.25A25.6 25.6 0 0 0 1048.31 668.61z" fill="rgb(52,224,185)"/><path d="M1073.9 668.1L1048.31 667.59A25.6 25.6 0 0 0 1048.59 671.95z" fill="rgb(47,224,208)"/><path d="M1073.9 668.1L1048.46 670.93A25.6 25.6 0 0 0 1049.31 675.22z" fill="rgb(47,207,215)"/><path d="M1073.9 668.1L1049.04 674.23A25.6 25.6 0 0 0 1050.45 678.37z" fill="rgb(47,190,223)"/><path d="M1073.9 668.1L1050.06 677.42A25.6 25.6 0 0 0 1051.99 681.34z" fill="rgb(47,173,231)"/><path d="M1073.9 668.1L1051.48 680.45A25.6 25.6 0 0 0 1053.91 684.09z" fill="rgb(47,156,239)"/><path d="M1073.9 668.1L1053.28 683.28A25.6 25.6 0 0 0 1056.16 686.56z" fill="rgb(47,139,247)"/><path d="M1073.9 668.1L1055.44 685.84A25.6 25.6 0 0 0 1058.72 688.72z" fill="rgb(47,123,255)"/><path d="M1073.9 668.1L1057.91 688.09A25.6 25.6 0 0 0 1061.55 690.52z" fill="rgb(62,114,255)"/><path d="M1073.9 668.1L1060.66 690.01A25.6 25.6 0 0 0 1064.58 691.94z" fill="rgb(77,107,255)"/><path d="M1073.9 668.1L1063.63 691.55A25.6 25.6 0 0 0 1067.77 692.96z" fill="rgb(92,99,255)"/><path d="M1073.9 668.1L1066.78 692.69A25.6 25.6 0 0 0 1071.07 693.54z" fill="rgb(107,90,255)"/><path d="M1073.9 668.1L1070.05 693.41A25.6 25.6 0 0 0 1074.41 693.69z" fill="rgb(122,83,255)"/><path d="M1073.9 668.1L1073.39 693.69A25.6 25.6 0 0 0 1077.75 693.41z" fill="rgb(138,75,255)"/><path d="M1073.9 668.1L1076.73 693.54A25.6 25.6 0 0 0 1081.02 692.69z" fill="rgb(157,75,249)"/><path d="M1073.9 668.1L1080.03 692.96A25.6 25.6 0 0 0 1084.17 691.55z" fill="rgb(176,76,244)"/><path d="M1073.9 668.1L1083.22 691.94A25.6 25.6 0 0 0 1087.14 690.01z" fill="rgb(196,77,239)"/><path d="M1073.9 668.1L1086.25 690.52A25.6 25.6 0 0 0 1089.89 688.09z" fill="rgb(216,77,234)"/><path d="M1073.9 668.1L1089.08 688.72A25.6 25.6 0 0 0 1092.36 685.84z" fill="rgb(235,78,229)"/><path d="M1073.9 668.1L1091.64 686.56A25.6 25.6 0 0 0 1094.52 683.28z" fill="rgb(255,79,224)"/><path d="M1073.9 668.1L1093.89 684.09A25.6 25.6 0 0 0 1096.32 680.45z" fill="rgb(255,73,196)"/><path d="M1073.9 668.1L1095.81 681.34A25.6 25.6 0 0 0 1097.74 677.42z" fill="rgb(255,67,168)"/><path d="M1073.9 668.1L1097.35 678.37A25.6 25.6 0 0 0 1098.76 674.23z" fill="rgb(255,62,141)"/><path d="M1073.9 668.1L1098.49 675.22A25.6 25.6 0 0 0 1099.34 670.93z" fill="rgb(255,56,113)"/><path d="M1073.9 668.1L1099.21 671.95A25.6 25.6 0 0 0 1099.49 667.59z" fill="rgb(255,50,85)"/><circle cx="1073.9" cy="668.1" r="25.6" fill="url(#whl)"/><circle cx="1073.9" cy="668.1" r="25.6" fill="url(#whs)"/><circle cx="1073.9" cy="668.1" r="25.200000000000003" fill="none" stroke="#555" stroke-opacity=".45" stroke-width=".8"/><g fill="none" stroke="#9fd0ff" stroke-opacity="0.45" stroke-width="7.5" stroke-linecap="round"><path d="M1146.9 649.5A10.5 10.5 0 0 0 1146.9 665.5"/><path d="M1160.3 649.5A10.5 10.5 0 0 1 1160.3 665.5"/><path d="M1141.4 642.9A19 19 0 0 0 1141.4 672.1"/><path d="M1165.8 642.9A19 19 0 0 1 1165.8 672.1"/><path d="M1135.2 637.1A27.5 27.5 0 0 0 1135.2 677.9"/><path d="M1172.0 637.1A27.5 27.5 0 0 1 1172.0 677.9"/></g><g fill="none" stroke="#1f5c97" stroke-opacity="1" stroke-width="4.6" stroke-linecap="round"><path d="M1146.9 649.5A10.5 10.5 0 0 0 1146.9 665.5"/><path d="M1160.3 649.5A10.5 10.5 0 0 1 1160.3 665.5"/><path d="M1141.4 642.9A19 19 0 0 0 1141.4 672.1"/><path d="M1165.8 642.9A19 19 0 0 1 1165.8 672.1"/><path d="M1135.2 637.1A27.5 27.5 0 0 0 1135.2 677.9"/><path d="M1172.0 637.1A27.5 27.5 0 0 1 1172.0 677.9"/></g><g stroke="#4a4a4a" stroke-width="2.800" fill="none" stroke-linecap="round"><path d="M1153.6 654.5L1137.1 697M1153.6 654.5L1170.1 697M1153.6 657.5V698.500"/><path stroke-width="1.500" d="M1148.6 668.500L1162.8999999999999 679.500M1158.6 668.500L1144.3 679.500M1144.3 679.500L1167.1 690M1162.8999999999999 679.500L1140.1 690M1148.6 668.500h10M1144.3 679.500h18.600M1140.1 690h27"/></g><circle cx="1153.6" cy="654.5" r="3.600" fill="#5a5a5a" stroke="#3c3c3c" stroke-width=".8"/><path d="M1229.300 640h22.500l20 17.500v36.800h-42.500z" fill="#000" opacity=".18" filter="url(#bl1)" transform="translate(0,1.500)"/><path d="M1229.300 640h22.500l20 17.500v36.800h-42.500z" fill="url(#docg)" stroke="#c4c4c4" stroke-width=".9"/><path d="M1251.800 640c2.500 5.500 2.500 11 .5 16.500 6-2.500 13-1.500 19.500 1z" fill="#f6f6f6" stroke="#c9c9c9" stroke-width=".8"/><circle cx="1236.200" cy="674.500" r="16.500" fill="#000" opacity=".28" filter="url(#bl1)"/><circle cx="1236.200" cy="673" r="14.800" fill="url(#clk)" stroke="url(#clr)" stroke-width="3"/><circle cx="1236.200" cy="673" r="16.200" fill="none" stroke="#6e6e6e" stroke-width=".7"/><path d="M1236.200 673.500v-11M1235.500 673h9.500" stroke="#1a1a1a" stroke-width="2" fill="none"/><path d="M1236.200 673l-6.500 7.500" stroke="#e0a898" stroke-width="1.200"/><rect x="1318.500" y="643" width="53" height="47" fill="#000" opacity=".25" filter="url(#bl1)"/><rect x="1317.600" y="641.400" width="52.900" height="47.200" fill="#fbfbfb" stroke="#8f8f8f" stroke-width=".9"/><rect x="1322" y="646" width="43.500" height="38" fill="#a3a7ad"/><path d="M1323.60 647.50h4.100v4.100h-4.100zM1323.60 653.65h4.100v4.100h-4.100zM1323.60 659.80h4.100v4.100h-4.100zM1323.60 665.95h4.100v4.100h-4.100zM1323.60 672.10h4.100v4.100h-4.100zM1323.60 678.25h4.100v4.100h-4.100zM1329.75 647.50h4.100v4.100h-4.100zM1329.75 653.65h4.100v4.100h-4.100zM1329.75 659.80h4.100v4.100h-4.100zM1329.75 665.95h4.100v4.100h-4.100zM1329.75 672.10h4.100v4.100h-4.100zM1329.75 678.25h4.100v4.100h-4.100zM1335.90 647.50h4.100v4.100h-4.100zM1335.90 653.65h4.100v4.100h-4.100zM1335.90 659.80h4.100v4.100h-4.100zM1335.90 665.95h4.100v4.100h-4.100zM1335.90 672.10h4.100v4.100h-4.100zM1335.90 678.25h4.100v4.100h-4.100zM1342.05 647.50h4.100v4.100h-4.100zM1342.05 653.65h4.100v4.100h-4.100zM1342.05 659.80h4.100v4.100h-4.100zM1342.05 665.95h4.100v4.100h-4.100zM1342.05 672.10h4.100v4.100h-4.100zM1342.05 678.25h4.100v4.100h-4.100zM1348.20 647.50h4.100v4.100h-4.100zM1348.20 653.65h4.100v4.100h-4.100zM1348.20 659.80h4.100v4.100h-4.100zM1348.20 665.95h4.100v4.100h-4.100zM1348.20 672.10h4.100v4.100h-4.100zM1348.20 678.25h4.100v4.100h-4.100zM1354.35 647.50h4.100v4.100h-4.100zM1354.35 653.65h4.100v4.100h-4.100zM1354.35 659.80h4.100v4.100h-4.100zM1354.35 665.95h4.100v4.100h-4.100zM1354.35 672.10h4.100v4.100h-4.100zM1354.35 678.25h4.100v4.100h-4.100zM1360.50 647.50h4.100v4.100h-4.100zM1360.50 653.65h4.100v4.100h-4.100zM1360.50 659.80h4.100v4.100h-4.100zM1360.50 665.95h4.100v4.100h-4.100zM1360.50 672.10h4.100v4.100h-4.100zM1360.50 678.25h4.100v4.100h-4.100z" fill="#fdfdfd"/><path d="M1310.200 650V693.800H1363.100z" fill="url(#ora)" stroke="#b27c28" stroke-width="1.200" stroke-linejoin="round"/><path d="M1318.200 667.600V685.800H1340.900z" fill="#dfe0e2" stroke="#b27c28" stroke-width="1"/><path d="M1311.500 656v36.500h47" fill="none" stroke="#b98632" stroke-width="2.200" stroke-dasharray=".8 1.400" opacity=".7"/><path d="M1404.4 688.0A25.3 25.3 0 0 1 1410.1 644.8" fill="none" stroke="url(#arr)" stroke-width="9.600"/><path d="M1399.600 639.300L1415.200 638.300L1414 652z" fill="#27388c" stroke="#27388c" stroke-width=".8" stroke-linejoin="round"/><path d="M1435.6 648.2A25.3 25.3 0 0 1 1429.9 691.4" fill="none" stroke="url(#arr2)" stroke-width="9.600"/><path d="M1440.400 696.900L1424.800 697.900L1426 684.200z" fill="#2a3a90" stroke="#2a3a90" stroke-width=".8" stroke-linejoin="round"/><circle cx="1420" cy="668.1" r="15.400" fill="url(#glb)" stroke="#0e2a84" stroke-width="1.300"/><g fill="#d8ecff" opacity=".85"><circle cx="1416" cy="664.1" r="1.100"/><circle cx="1423" cy="662.1" r=".9"/><circle cx="1426" cy="669.1" r="1.100"/><circle cx="1419" cy="671.1" r="1.200"/><circle cx="1413" cy="672.1" r=".9"/><circle cx="1422" cy="676.1" r=".9"/></g><path d="M1416 664.1L1423 662.1L1426 669.1L1419 671.1zM1419 671.1L1413 672.1M1419 671.1L1422 676.1" stroke="#bfe0ff" stroke-width=".6" fill="none" opacity=".7"/><ellipse cx="1500" cy="697.4" rx="24" ry="3" fill="#000" opacity=".22" filter="url(#bl1)"/><path d="M1495.0 647.9L1496.3 640.6L1497.0 639.3L1503.0 639.3L1503.7 640.6L1505.0 647.9L1505.7 648.1L1510.5 642.4L1511.7 641.6L1516.9 644.6L1516.9 646.1L1514.3 653.1L1514.8 653.6L1521.8 651.0L1523.3 651.0L1526.3 656.2L1525.5 657.4L1519.8 662.2L1520.0 662.9L1527.3 664.2L1528.6 664.9L1528.6 670.9L1527.3 671.6L1520.0 672.9L1519.8 673.6L1525.5 678.4L1526.3 679.6L1523.3 684.8L1521.8 684.8L1514.8 682.2L1514.3 682.7L1516.9 689.7L1516.9 691.2L1511.7 694.2L1510.5 693.4L1505.7 687.7L1505.0 687.9L1503.7 695.2L1503.0 696.5L1497.0 696.5L1496.3 695.2L1495.0 687.9L1494.3 687.7L1489.5 693.4L1488.3 694.2L1483.1 691.2L1483.1 689.7L1485.7 682.7L1485.2 682.2L1478.2 684.8L1476.7 684.8L1473.7 679.6L1474.5 678.4L1480.2 673.6L1480.0 672.9L1472.7 671.6L1471.4 670.9L1471.4 664.9L1472.7 664.2L1480.0 662.9L1480.2 662.2L1474.5 657.4L1473.7 656.2L1476.7 651.0L1478.2 651.0L1485.2 653.6L1485.7 653.1L1483.1 646.1L1483.1 644.6L1488.3 641.6L1489.5 642.4L1494.3 648.1zM1511.7 667.9A11.700 11.700 0 1 0 1488.3 667.9A11.700 11.700 0 1 0 1511.7 667.9z" fill="url(#gear)" fill-rule="evenodd" stroke="#474c58" stroke-width="1.100" stroke-linejoin="round"/><circle cx="1500" cy="667.9" r="16.600" fill="none" stroke="url(#gear2)" stroke-width="2.600"/><circle cx="1500" cy="667.9" r="18.300" fill="none" stroke="#8a93a8" stroke-width=".8" opacity=".8"/><circle cx="1500" cy="667.9" r="12.300" fill="none" stroke="#5c6272" stroke-width="1.300"/></svg>
<svg class="tx" role="img" aria-label="播放行为" style="left:870.0px;top:787.7px" width="106.0" height="32.5" fill="#1d1d1d"><text x="0" y="22.88" font-size="26" font-weight="bold">播放行为</text></svg>
<svg class="tx" role="img" aria-label="如果选择为空:" style="left:1008.2px;top:839.6px" width="170.3" height="32.9" fill="#1d1d1d"><text x="0" y="23.14" font-size="26.3">如果选择为空</text><text style="white-space:pre" x="159.64" y="23.14" font-size="26.30">:</text></svg>
<svg class="tx" role="img" aria-label="如果选择不为空:" style="left:981.9px;top:898.1px" width="196.6" height="32.9" fill="#1d1d1d"><text x="0" y="23.14" font-size="26.3">如果选择不为空</text><text style="white-space:pre" x="185.94" y="23.14" font-size="26.30">:</text></svg>
<div class="pop" style="left:1201.5px;top:832px"><div class="cap"><svg width="32" height="38" viewBox="0 0 32 38"><path d="M10 15.5l6-6 6 6M10 23l6 6 6-6" fill="none" stroke="#fff" stroke-width="2.6" stroke-linecap="round" stroke-linejoin="round"/></svg></div></div>
<svg class="tx" role="img" aria-label="从开始播放" style="left:1218.5px;top:839.1px" width="133.5" height="32.9" fill="#1d1d1d"><text x="0" y="23.14" font-size="26.3">从开始播放</text></svg>
<div class="pop" style="left:1201.5px;top:890px"><div class="cap"><svg width="32" height="38" viewBox="0 0 32 38"><path d="M10 15.5l6-6 6 6M10 23l6 6 6-6" fill="none" stroke="#fff" stroke-width="2.6" stroke-linecap="round" stroke-linejoin="round"/></svg></div></div>
<svg class="tx" role="img" aria-label="播放选择" style="left:1218.5px;top:897.1px" width="107.2" height="32.9" fill="#1d1d1d"><text x="0" y="23.14" font-size="26.3">播放选择</text></svg>
<div class="cb" style="left:1200.3px;top:958.3px;width:27.4px;height:27.4px;border-radius:6px"></div>
<svg class="tx" role="img" aria-label="空格键倒退声音" style="left:1236.8px;top:960.1px" width="186.1" height="32.9" fill="#1d1d1d"><text x="0" y="23.14" font-size="26.3">空格键倒退声音</text></svg>
<div class="cb" style="left:1200.3px;top:1002.3px;width:27.4px;height:27.4px;border-radius:6px"></div>
<svg class="tx" role="img" aria-label="显示如下播放" style="left:1236.8px;top:1004.4px" width="159.8" height="32.9" fill="#1d1d1d"><text x="0" y="23.14" font-size="26.3">显示如下播放</text></svg>
<div class="cb dis" style="left:1236.3px;top:1046.3px;width:27.4px;height:27.4px;border-radius:6px"></div>
<svg class="tx" role="img" aria-label="连续滚动" style="left:1273.0px;top:1048.1px" width="107.2" height="32.9" fill="#b3b3b3"><text x="0" y="23.14" font-size="26.3">连续滚动</text></svg>
<div class="sep" style="top:1098px"></div>
<svg class="tx" role="img" aria-label="通用行为" style="left:870.0px;top:1129.7px" width="106.0" height="32.5" fill="#1d1d1d"><text x="0" y="22.88" font-size="26" font-weight="bold">通用行为</text></svg>
<div class="cb" style="left:1003.2px;top:1182.2px;width:27.4px;height:27.4px;border-radius:6px"></div>
<svg class="tx" role="img" aria-label="通过点击边界来扩展选择" style="left:1040.0px;top:1183.8px" width="291.3" height="32.9" fill="#1d1d1d"><text x="0" y="23.14" font-size="26.3">通过点击边界来扩展选择</text></svg>
<div class="cb on" style="left:1003.2px;top:1226.2px;width:27.4px;height:27.4px;border-radius:6px"><svg width="27" height="27" viewBox="0 0 27 27"><path d="M7 14.5l4.6 5.2L20 7.5" fill="none" stroke="#fff" stroke-width="2.8" stroke-linecap="round" stroke-linejoin="round"/></svg></div>
<svg class="tx" role="img" aria-label="在启动时创建新的声音文档" style="left:1040.0px;top:1227.8px" width="317.6" height="32.9" fill="#1d1d1d"><text x="0" y="23.14" font-size="26.3">在启动时创建新的声音文档</text></svg>
<div class="cb on" style="left:1003.2px;top:1270.2px;width:27.4px;height:27.4px;border-radius:6px"><svg width="27" height="27" viewBox="0 0 27 27"><path d="M7 14.5l4.6 5.2L20 7.5" fill="none" stroke="#fff" stroke-width="2.8" stroke-linecap="round" stroke-linejoin="round"/></svg></div>
<svg class="tx" role="img" aria-label="立即开始录制" style="left:1040.0px;top:1271.8px" width="159.8" height="32.9" fill="#1d1d1d"><text x="0" y="23.14" font-size="26.3">立即开始录制</text></svg>
<div class="cb on" style="left:1003.2px;top:1314.2px;width:27.4px;height:27.4px;border-radius:6px"><svg width="27" height="27" viewBox="0 0 27 27"><path d="M7 14.5l4.6 5.2L20 7.5" fill="none" stroke="#fff" stroke-width="2.8" stroke-linecap="round" stroke-linejoin="round"/></svg></div>
<svg class="tx" role="img" aria-label="在丢失文档属性之前发出警告" style="left:1040.0px;top:1315.8px" width="343.9" height="32.9" fill="#1d1d1d"><text x="0" y="23.14" font-size="26.3">在丢失文档属性之前发出警告</text></svg>
<div class="cb on" style="left:1003.2px;top:1358.2px;width:27.4px;height:27.4px;border-radius:6px"><svg width="27" height="27" viewBox="0 0 27 27"><path d="M7 14.5l4.6 5.2L20 7.5" fill="none" stroke="#fff" stroke-width="2.8" stroke-linecap="round" stroke-linejoin="round"/></svg></div>
<svg class="tx" role="img" aria-label="使用通知来指示任务结束" style="left:1040.0px;top:1359.8px" width="291.3" height="32.9" fill="#1d1d1d"><text x="0" y="23.14" font-size="26.3">使用通知来指示任务结束</text></svg>
<div class="cb on" style="left:1039.5px;top:1401.3px;width:27.4px;height:27.4px;border-radius:6px"><svg width="27" height="27" viewBox="0 0 27 27"><path d="M7 14.5l4.6 5.2L20 7.5" fill="none" stroke="#fff" stroke-width="2.8" stroke-linecap="round" stroke-linejoin="round"/></svg></div>
<svg class="tx" role="img" aria-label="仅在后台通知" style="left:1076.0px;top:1403.0px" width="159.8" height="32.9" fill="#1d1d1d"><text x="0" y="23.14" font-size="26.3">仅在后台通知</text></svg>
<div class="sep" style="top:1454px"></div>
<svg class="tx" role="img" aria-label="编辑" style="left:870.0px;top:1485.2px" width="54.0" height="32.5" fill="#1d1d1d"><text x="0" y="22.88" font-size="26" font-weight="bold">编辑</text></svg>
<div class="cb on" style="left:972.3px;top:1537.3px;width:27.4px;height:27.4px;border-radius:6px"><svg width="27" height="27" viewBox="0 0 27 27"><path d="M7 14.5l4.6 5.2L20 7.5" fill="none" stroke="#fff" stroke-width="2.8" stroke-linecap="round" stroke-linejoin="round"/></svg></div>
<svg class="tx" role="img" aria-label="智能编辑:" style="left:1005.8px;top:1539.1px" width="117.7" height="32.9" fill="#1d1d1d"><text x="0" y="23.14" font-size="26.3">智能编辑</text><text style="white-space:pre" x="107.04" y="23.14" font-size="26.30">:</text></svg>
<div class="inp" style="left:1139px;top:1529.5px">10</div>
<svg class="tx" role="img" aria-label="毫秒交叉淡入淡出" style="left:1268.5px;top:1539.1px" width="212.4" height="32.9" fill="#1d1d1d"><text x="0" y="23.14" font-size="26.3">毫秒交叉淡入淡出</text></svg>
<svg class="tx" role="img" aria-label="编辑预览长度:" style="left:953.2px;top:1603.1px" width="170.3" height="32.9" fill="#1d1d1d"><text x="0" y="23.14" font-size="26.3">编辑预览长度</text><text style="white-space:pre" x="159.64" y="23.14" font-size="26.30">:</text></svg>
<div class="inp" style="left:1139px;top:1593.7px">0.50</div>
<svg class="tx" role="img" aria-label="秒" style="left:1268.5px;top:1603.1px" width="28.3" height="32.9" fill="#1d1d1d"><text x="0" y="23.14" font-size="26.3">秒</text></svg>
</div></div>
</body></html>
